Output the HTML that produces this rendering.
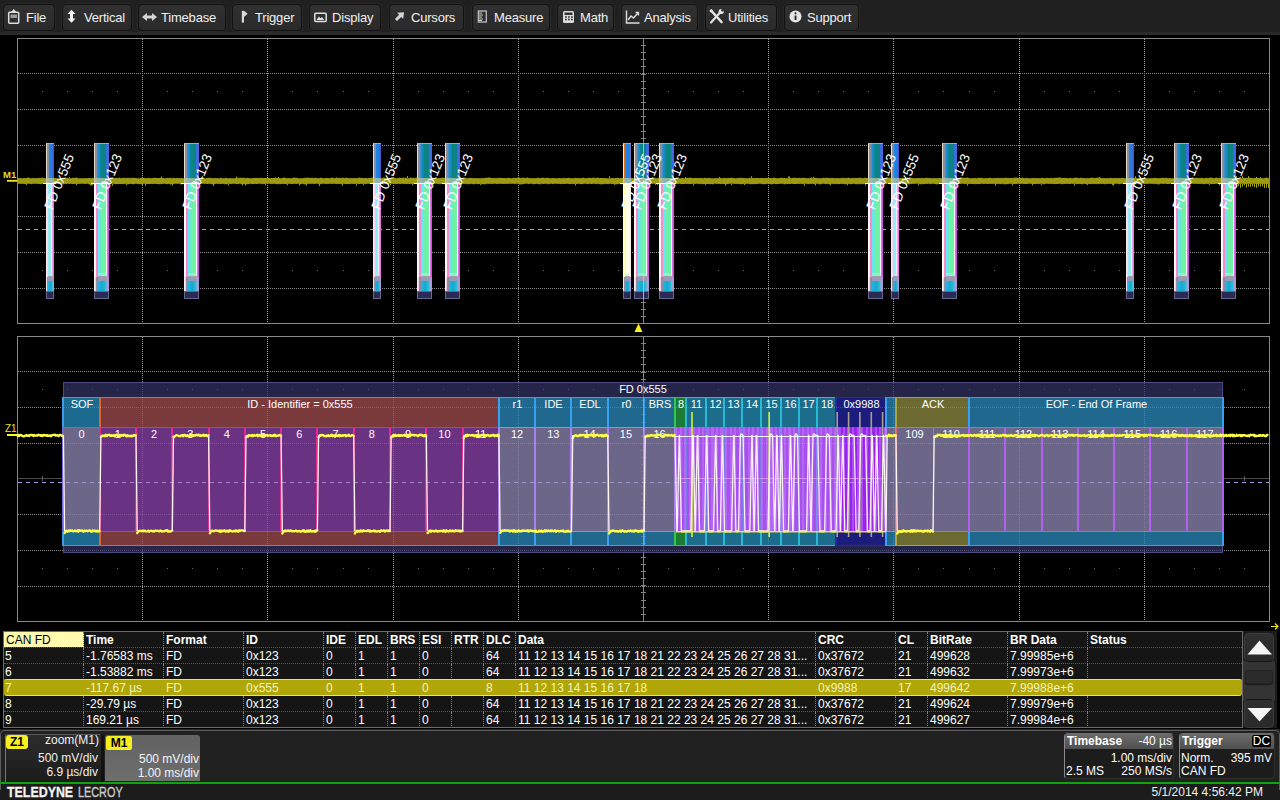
<!DOCTYPE html>
<html><head><meta charset="utf-8"><title>CAN FD decode</title>
<style>
*{box-sizing:border-box;margin:0;padding:0}
html,body{width:1280px;height:800px;overflow:hidden;background:#000;}
body{font-family:"Liberation Sans",sans-serif;color:#fff;position:relative}
#menubar{position:absolute;left:0;top:0;width:1280px;height:35px;background:#202020;border-bottom:3px solid #2a2a2a}
.mb{position:absolute;top:4px;height:27px;background:linear-gradient(#313131,#2a2a2a);border:1px solid #121212;border-radius:4px;box-shadow:0 0 0 1px #282828;color:#f0f0f0;font-size:13px;letter-spacing:-0.2px;line-height:25px;white-space:nowrap}
.mb span{position:absolute;top:0}
.mb svg{position:absolute;left:0;top:0}
#scope{position:absolute;left:0;top:0}
#tbl{position:absolute;left:3px;top:631px;width:1240px;height:97px;background:#151515;border:1px solid #6a6a6a;border-right-color:#6a6a6a;font-size:12px;overflow:hidden}
.row{position:absolute;left:0;width:1238px;height:16px;border-bottom:1px dotted #5a5a5a;line-height:17px;white-space:nowrap}
.row.hd{font-weight:bold}
.row.sel{background:#b0a608;color:#f6f2b8;border-bottom:1px solid #f0ec28;border-top:1px solid #f0ec28;border-radius:3px;line-height:16px;margin-top:-1px;height:17px}
.c{position:absolute;top:0;height:16px;padding-left:2px;border-left:1px dotted #808080;overflow:hidden;margin-left:-1px}
.row.sel .c{border-left-color:transparent;top:0}
.c0{border-left:none}
#footer{position:absolute;left:0;top:729px;width:1280px;height:71px;background:linear-gradient(#212121 0,#212121 53px,#1c1c1c 53px)}
</style></head>
<body>
<svg id="scope" width="1280" height="632" viewBox="0 0 1280 632" font-family='"Liberation Sans", sans-serif'>
<g shape-rendering="crispEdges" fill="none">
<line x1="142.5" y1="39" x2="142.5" y2="323" stroke="#9c9c9c" stroke-dasharray="1 1"/>
<line x1="267.5" y1="39" x2="267.5" y2="323" stroke="#9c9c9c" stroke-dasharray="1 1"/>
<line x1="393.5" y1="39" x2="393.5" y2="323" stroke="#9c9c9c" stroke-dasharray="1 1"/>
<line x1="518.5" y1="39" x2="518.5" y2="323" stroke="#9c9c9c" stroke-dasharray="1 1"/>
<line x1="768.5" y1="39" x2="768.5" y2="323" stroke="#9c9c9c" stroke-dasharray="1 1"/>
<line x1="893.5" y1="39" x2="893.5" y2="323" stroke="#9c9c9c" stroke-dasharray="1 1"/>
<line x1="1019.5" y1="39" x2="1019.5" y2="323" stroke="#9c9c9c" stroke-dasharray="1 1"/>
<line x1="1144.5" y1="39" x2="1144.5" y2="323" stroke="#9c9c9c" stroke-dasharray="1 1"/>
<line x1="18" y1="73.5" x2="1269" y2="73.5" stroke="#8a8a8a" stroke-dasharray="1 1"/>
<line x1="18" y1="109.5" x2="1269" y2="109.5" stroke="#8a8a8a" stroke-dasharray="1 1"/>
<line x1="18" y1="145.5" x2="1269" y2="145.5" stroke="#8a8a8a" stroke-dasharray="1 1"/>
<line x1="18" y1="216.5" x2="1269" y2="216.5" stroke="#8a8a8a" stroke-dasharray="1 1"/>
<line x1="18" y1="252.5" x2="1269" y2="252.5" stroke="#8a8a8a" stroke-dasharray="1 1"/>
<line x1="18" y1="288.5" x2="1269" y2="288.5" stroke="#8a8a8a" stroke-dasharray="1 1"/>
<line x1="643.5" y1="38" x2="643.5" y2="323" stroke="#848484"/>
<line x1="17" y1="180.5" x2="1269" y2="180.5" stroke="#4a4a4a"/>
<path d="M641.0 45.5h5 M641.0 52.5h5 M641.0 59.5h5 M641.0 66.5h5 M641.0 74.5h5 M641.0 81.5h5 M641.0 88.5h5 M641.0 95.5h5 M641.0 102.5h5 M641.0 109.5h5 M641.0 116.5h5 M641.0 124.5h5 M641.0 131.5h5 M641.0 138.5h5 M641.0 145.5h5 M641.0 152.5h5 M641.0 159.5h5 M641.0 166.5h5 M641.0 173.5h5 M641.0 180.5h5 M641.0 188.5h5 M641.0 195.5h5 M641.0 202.5h5 M641.0 209.5h5 M641.0 216.5h5 M641.0 223.5h5 M641.0 230.5h5 M641.0 238.5h5 M641.0 245.5h5 M641.0 252.5h5 M641.0 259.5h5 M641.0 266.5h5 M641.0 273.5h5 M641.0 280.5h5 M641.0 287.5h5 M641.0 294.5h5 M641.0 302.5h5 M641.0 309.5h5 M641.0 316.5h5" stroke="#848484"/>
<path d="M42.5 178.0v5 M67.5 178.0v5 M92.5 178.0v5 M117.5 178.0v5 M142.5 178.0v5 M167.5 178.0v5 M192.5 178.0v5 M217.5 178.0v5 M242.5 178.0v5 M267.5 178.0v5 M292.5 178.0v5 M317.5 178.0v5 M343.5 178.0v5 M368.5 178.0v5 M393.5 178.0v5 M418.5 178.0v5 M443.5 178.0v5 M468.5 178.0v5 M493.5 178.0v5 M518.5 178.0v5 M543.5 178.0v5 M568.5 178.0v5 M593.5 178.0v5 M618.5 178.0v5 M643.5 178.0v5 M668.5 178.0v5 M693.5 178.0v5 M718.5 178.0v5 M743.5 178.0v5 M768.5 178.0v5 M793.5 178.0v5 M818.5 178.0v5 M843.5 178.0v5 M868.5 178.0v5 M893.5 178.0v5 M918.5 178.0v5 M943.5 178.0v5 M969.5 178.0v5 M994.5 178.0v5 M1019.5 178.0v5 M1044.5 178.0v5 M1069.5 178.0v5 M1094.5 178.0v5 M1119.5 178.0v5 M1144.5 178.0v5 M1169.5 178.0v5 M1194.5 178.0v5 M1219.5 178.0v5 M1244.5 178.0v5" stroke="#5e5e5e"/>
<path d="M42 91.5h1 M67 91.5h1 M92 91.5h1 M117 91.5h1 M167 91.5h1 M192 91.5h1 M217 91.5h1 M242 91.5h1 M292 91.5h1 M317 91.5h1 M343 91.5h1 M368 91.5h1 M418 91.5h1 M443 91.5h1 M468 91.5h1 M493 91.5h1 M543 91.5h1 M568 91.5h1 M593 91.5h1 M618 91.5h1 M668 91.5h1 M693 91.5h1 M718 91.5h1 M743 91.5h1 M793 91.5h1 M818 91.5h1 M843 91.5h1 M868 91.5h1 M918 91.5h1 M943 91.5h1 M969 91.5h1 M994 91.5h1 M1044 91.5h1 M1069 91.5h1 M1094 91.5h1 M1119 91.5h1 M1169 91.5h1 M1194 91.5h1 M1219 91.5h1 M1244 91.5h1 M42 270.5h1 M67 270.5h1 M92 270.5h1 M117 270.5h1 M167 270.5h1 M192 270.5h1 M217 270.5h1 M242 270.5h1 M292 270.5h1 M317 270.5h1 M343 270.5h1 M368 270.5h1 M418 270.5h1 M443 270.5h1 M468 270.5h1 M493 270.5h1 M543 270.5h1 M568 270.5h1 M593 270.5h1 M618 270.5h1 M668 270.5h1 M693 270.5h1 M718 270.5h1 M743 270.5h1 M793 270.5h1 M818 270.5h1 M843 270.5h1 M868 270.5h1 M918 270.5h1 M943 270.5h1 M969 270.5h1 M994 270.5h1 M1044 270.5h1 M1069 270.5h1 M1094 270.5h1 M1119 270.5h1 M1169 270.5h1 M1194 270.5h1 M1219 270.5h1 M1244 270.5h1" stroke="#686868"/>
<rect x="17.5" y="38.5" width="1252" height="285" stroke="#888888"/>
</g>
<path d="M18 178.2 L19 177.9 L20 178.0 L21 178.3 L22 178.3 L23 178.3 L24 178.1 L25 178.3 L26 177.9 L27 178.0 L28 177.4 L29 177.6 L30 178.3 L31 178.2 L32 178.3 L33 177.9 L34 178.0 L35 178.3 L36 177.9 L37 178.2 L38 178.1 L39 177.7 L40 178.2 L41 178.1 L42 177.8 L43 177.4 L44 178.1 L45 178.3 L46 178.3 L47 177.8 L48 177.6 L49 177.9 L50 178.0 L51 177.7 L52 178.1 L53 178.3 L54 177.9 L55 177.7 L56 178.2 L57 178.3 L58 178.3 L59 178.3 L60 178.3 L61 178.2 L62 178.3 L63 178.0 L64 177.7 L65 178.2 L66 178.2 L67 177.5 L68 178.3 L69 178.3 L70 178.0 L71 178.3 L72 178.2 L73 177.5 L74 178.1 L75 177.9 L76 177.6 L77 177.6 L78 178.2 L79 178.3 L80 178.3 L81 178.3 L82 178.2 L83 178.3 L84 178.3 L85 178.3 L86 178.0 L87 178.2 L88 178.2 L89 177.7 L90 178.1 L91 178.3 L92 178.2 L93 177.7 L94 178.3 L95 178.0 L96 178.0 L97 178.0 L98 177.6 L99 178.2 L100 178.3 L101 178.0 L102 178.2 L103 177.7 L104 177.6 L105 177.7 L106 178.3 L107 178.2 L108 178.3 L109 178.2 L110 177.5 L111 177.5 L112 177.5 L113 178.3 L114 178.3 L115 177.9 L116 177.7 L117 177.9 L118 178.3 L119 177.6 L120 177.8 L121 178.3 L122 178.2 L123 177.5 L124 178.2 L125 177.8 L126 178.3 L127 177.6 L128 178.3 L129 177.4 L130 178.2 L131 178.3 L132 177.5 L133 178.1 L134 178.1 L135 177.7 L136 178.2 L137 178.2 L138 178.2 L139 178.3 L140 178.2 L141 178.0 L142 178.1 L143 178.1 L144 178.1 L145 178.1 L146 178.3 L147 178.3 L148 177.8 L149 178.2 L150 178.0 L151 178.3 L152 178.2 L153 177.8 L154 178.0 L155 177.6 L156 178.0 L157 178.1 L158 178.1 L159 178.1 L160 177.9 L161 177.5 L162 178.0 L163 177.7 L164 178.3 L165 178.3 L166 178.3 L167 177.7 L168 178.3 L169 177.9 L170 177.6 L171 178.3 L172 178.2 L173 177.4 L174 178.3 L175 178.1 L176 178.3 L177 177.8 L178 178.0 L179 178.3 L180 177.9 L181 178.3 L182 177.7 L183 178.3 L184 178.3 L185 178.2 L186 178.1 L187 177.7 L188 178.3 L189 178.0 L190 178.3 L191 177.9 L192 178.3 L193 177.9 L194 178.3 L195 178.3 L196 178.1 L197 178.0 L198 178.2 L199 178.1 L200 178.3 L201 178.3 L202 178.2 L203 177.8 L204 178.1 L205 178.2 L206 178.2 L207 177.8 L208 178.3 L209 177.5 L210 177.7 L211 178.1 L212 178.2 L213 177.9 L214 178.2 L215 177.9 L216 178.2 L217 178.3 L218 178.3 L219 178.2 L220 178.3 L221 177.6 L222 178.2 L223 178.2 L224 178.3 L225 178.2 L226 177.4 L227 178.2 L228 178.2 L229 178.3 L230 178.1 L231 178.3 L232 178.3 L233 178.3 L234 178.3 L235 178.2 L236 178.0 L237 177.8 L238 177.8 L239 178.2 L240 177.4 L241 177.8 L242 178.3 L243 177.6 L244 177.8 L245 178.3 L246 178.1 L247 177.7 L248 178.0 L249 177.9 L250 178.3 L251 178.3 L252 178.3 L253 178.0 L254 177.9 L255 178.1 L256 177.7 L257 178.1 L258 177.9 L259 177.8 L260 178.3 L261 177.8 L262 177.8 L263 178.1 L264 178.1 L265 177.8 L266 177.9 L267 178.3 L268 177.8 L269 178.0 L270 178.3 L271 177.9 L272 177.9 L273 178.1 L274 178.1 L275 177.6 L276 177.4 L277 178.3 L278 177.7 L279 178.1 L280 178.3 L281 178.3 L282 178.3 L283 177.5 L284 177.7 L285 177.6 L286 178.3 L287 178.1 L288 178.3 L289 178.1 L290 178.3 L291 178.2 L292 178.3 L293 177.7 L294 177.5 L295 177.6 L296 178.2 L297 177.4 L298 178.2 L299 178.2 L300 178.3 L301 178.2 L302 178.2 L303 178.1 L304 178.2 L305 177.6 L306 177.9 L307 177.5 L308 177.8 L309 177.8 L310 177.8 L311 178.2 L312 177.5 L313 178.1 L314 178.2 L315 177.4 L316 177.9 L317 178.0 L318 178.3 L319 178.3 L320 178.1 L321 177.6 L322 178.1 L323 178.3 L324 178.2 L325 178.2 L326 178.0 L327 177.8 L328 178.1 L329 178.2 L330 178.3 L331 177.5 L332 178.1 L333 177.6 L334 178.2 L335 178.2 L336 177.5 L337 177.6 L338 178.3 L339 177.6 L340 178.0 L341 178.2 L342 177.7 L343 177.4 L344 178.3 L345 178.1 L346 177.5 L347 177.9 L348 178.1 L349 178.3 L350 178.3 L351 177.9 L352 178.3 L353 177.9 L354 178.3 L355 178.1 L356 178.2 L357 178.0 L358 178.2 L359 177.5 L360 177.6 L361 178.3 L362 177.5 L363 178.2 L364 178.1 L365 178.1 L366 177.9 L367 178.3 L368 178.2 L369 177.9 L370 177.7 L371 178.1 L372 177.5 L373 177.7 L374 178.3 L375 178.2 L376 178.1 L377 178.3 L378 177.9 L379 178.3 L380 178.3 L381 178.3 L382 178.3 L383 177.6 L384 177.8 L385 177.5 L386 178.3 L387 177.8 L388 177.9 L389 178.2 L390 178.3 L391 178.2 L392 177.5 L393 177.5 L394 178.2 L395 177.7 L396 178.3 L397 178.2 L398 178.3 L399 177.6 L400 178.1 L401 177.8 L402 178.3 L403 177.5 L404 177.8 L405 178.2 L406 177.5 L407 178.2 L408 178.2 L409 178.3 L410 177.5 L411 177.5 L412 178.3 L413 177.5 L414 178.2 L415 178.1 L416 177.5 L417 177.7 L418 177.7 L419 178.0 L420 178.2 L421 177.7 L422 178.3 L423 178.2 L424 178.3 L425 178.2 L426 177.6 L427 178.2 L428 178.3 L429 177.8 L430 178.3 L431 178.0 L432 177.8 L433 177.9 L434 177.7 L435 178.0 L436 177.8 L437 178.2 L438 178.3 L439 178.0 L440 178.2 L441 178.1 L442 177.7 L443 177.4 L444 178.1 L445 177.7 L446 178.3 L447 178.3 L448 177.4 L449 177.5 L450 177.6 L451 178.2 L452 177.5 L453 178.0 L454 178.3 L455 178.3 L456 178.2 L457 177.9 L458 178.3 L459 177.9 L460 178.2 L461 177.7 L462 178.3 L463 178.2 L464 177.9 L465 178.3 L466 178.1 L467 178.2 L468 178.2 L469 178.2 L470 177.6 L471 178.2 L472 177.8 L473 178.3 L474 178.1 L475 178.2 L476 178.1 L477 178.3 L478 177.9 L479 178.3 L480 178.2 L481 178.3 L482 178.1 L483 178.3 L484 177.7 L485 178.3 L486 177.5 L487 178.1 L488 177.5 L489 177.6 L490 177.7 L491 177.7 L492 178.2 L493 177.7 L494 178.3 L495 178.1 L496 178.3 L497 177.8 L498 178.3 L499 177.8 L500 177.7 L501 178.0 L502 177.9 L503 178.1 L504 178.1 L505 178.1 L506 178.3 L507 178.1 L508 177.8 L509 178.1 L510 178.1 L511 178.3 L512 178.3 L513 178.1 L514 177.9 L515 177.8 L516 178.1 L517 178.1 L518 177.5 L519 177.6 L520 177.8 L521 178.3 L522 178.1 L523 177.5 L524 177.7 L525 178.3 L526 177.8 L527 177.6 L528 177.7 L529 178.1 L530 178.3 L531 178.1 L532 178.3 L533 178.3 L534 177.9 L535 178.3 L536 178.3 L537 177.9 L538 177.6 L539 178.0 L540 178.3 L541 177.9 L542 177.7 L543 177.4 L544 178.2 L545 178.1 L546 177.8 L547 177.7 L548 177.9 L549 178.0 L550 178.2 L551 178.3 L552 178.0 L553 178.1 L554 178.3 L555 177.9 L556 178.3 L557 178.3 L558 178.3 L559 178.0 L560 177.9 L561 178.3 L562 178.2 L563 178.3 L564 177.6 L565 178.2 L566 178.3 L567 178.0 L568 177.9 L569 177.5 L570 178.2 L571 178.3 L572 178.2 L573 178.3 L574 178.3 L575 177.5 L576 178.3 L577 178.1 L578 177.7 L579 178.2 L580 178.3 L581 177.7 L582 178.3 L583 177.8 L584 177.8 L585 178.3 L586 178.3 L587 178.2 L588 177.9 L589 177.8 L590 178.0 L591 177.7 L592 178.2 L593 177.5 L594 177.6 L595 178.2 L596 177.8 L597 177.8 L598 177.6 L599 178.2 L600 177.9 L601 177.9 L602 178.1 L603 177.9 L604 178.1 L605 178.0 L606 178.3 L607 178.3 L608 178.3 L609 178.3 L610 178.2 L611 178.3 L612 177.9 L613 177.9 L614 178.3 L615 178.2 L616 177.7 L617 178.3 L618 177.5 L619 178.3 L620 178.3 L621 177.7 L622 177.9 L623 177.9 L624 178.3 L625 177.8 L626 178.2 L627 178.3 L628 178.2 L629 178.2 L630 177.5 L631 177.6 L632 178.3 L633 178.1 L634 178.2 L635 178.0 L636 177.6 L637 177.7 L638 178.3 L639 177.8 L640 178.3 L641 178.1 L642 178.3 L643 178.2 L644 178.2 L645 178.2 L646 177.9 L647 178.3 L648 178.3 L649 177.9 L650 177.9 L651 178.2 L652 177.6 L653 177.6 L654 178.3 L655 177.6 L656 178.2 L657 178.3 L658 178.0 L659 177.8 L660 178.2 L661 178.3 L662 177.9 L663 178.3 L664 177.8 L665 178.3 L666 177.6 L667 178.3 L668 177.9 L669 178.3 L670 178.2 L671 178.1 L672 178.2 L673 177.4 L674 178.3 L675 178.3 L676 177.4 L677 177.8 L678 178.3 L679 178.3 L680 178.2 L681 178.2 L682 177.9 L683 177.9 L684 178.3 L685 178.2 L686 177.6 L687 178.0 L688 178.1 L689 177.8 L690 177.8 L691 177.6 L692 177.9 L693 178.2 L694 178.3 L695 177.7 L696 177.9 L697 178.1 L698 178.0 L699 177.9 L700 178.3 L701 177.8 L702 178.1 L703 178.3 L704 178.3 L705 177.5 L706 178.3 L707 178.0 L708 178.1 L709 177.7 L710 178.1 L711 178.3 L712 178.2 L713 178.3 L714 178.2 L715 178.2 L716 178.3 L717 178.1 L718 178.2 L719 178.3 L720 177.5 L721 178.3 L722 178.2 L723 178.3 L724 177.7 L725 178.1 L726 178.3 L727 178.2 L728 177.7 L729 178.1 L730 178.0 L731 177.7 L732 177.6 L733 178.2 L734 178.1 L735 178.3 L736 178.2 L737 178.2 L738 178.1 L739 177.9 L740 177.5 L741 178.3 L742 177.6 L743 178.3 L744 177.9 L745 178.3 L746 177.9 L747 178.3 L748 178.3 L749 178.2 L750 177.6 L751 178.3 L752 178.0 L753 177.9 L754 177.7 L755 178.3 L756 178.0 L757 178.1 L758 178.0 L759 178.3 L760 178.1 L761 178.1 L762 178.1 L763 178.0 L764 178.3 L765 178.1 L766 177.9 L767 178.2 L768 177.5 L769 177.9 L770 178.3 L771 177.9 L772 178.2 L773 178.1 L774 177.6 L775 177.8 L776 178.2 L777 178.2 L778 178.1 L779 178.3 L780 178.1 L781 177.7 L782 177.7 L783 178.1 L784 178.1 L785 177.9 L786 178.2 L787 178.2 L788 177.9 L789 178.3 L790 177.6 L791 178.3 L792 178.3 L793 177.5 L794 177.9 L795 177.6 L796 178.0 L797 177.9 L798 177.9 L799 177.9 L800 177.8 L801 178.3 L802 177.8 L803 177.9 L804 177.7 L805 178.0 L806 178.2 L807 178.2 L808 177.9 L809 178.3 L810 178.3 L811 177.7 L812 177.5 L813 178.3 L814 178.0 L815 177.4 L816 178.1 L817 177.9 L818 178.3 L819 178.3 L820 178.3 L821 178.3 L822 178.3 L823 177.8 L824 177.8 L825 178.3 L826 177.8 L827 177.8 L828 177.9 L829 178.1 L830 178.2 L831 177.8 L832 178.3 L833 177.7 L834 178.2 L835 178.3 L836 178.1 L837 178.2 L838 178.1 L839 178.3 L840 178.2 L841 177.9 L842 178.2 L843 177.5 L844 178.0 L845 178.3 L846 177.9 L847 178.2 L848 177.4 L849 178.0 L850 178.1 L851 178.2 L852 178.0 L853 177.7 L854 178.3 L855 178.1 L856 177.7 L857 178.3 L858 177.7 L859 178.0 L860 177.6 L861 177.9 L862 178.2 L863 178.0 L864 178.3 L865 177.5 L866 178.0 L867 178.1 L868 178.2 L869 177.7 L870 178.3 L871 177.8 L872 178.0 L873 177.6 L874 178.1 L875 178.3 L876 178.3 L877 178.2 L878 178.2 L879 178.3 L880 177.4 L881 178.3 L882 177.7 L883 178.0 L884 178.1 L885 178.3 L886 177.6 L887 178.0 L888 177.8 L889 177.5 L890 177.7 L891 178.2 L892 178.3 L893 178.3 L894 178.0 L895 178.1 L896 177.6 L897 178.0 L898 178.3 L899 178.2 L900 177.9 L901 177.9 L902 178.1 L903 177.5 L904 178.3 L905 178.2 L906 177.6 L907 177.7 L908 177.7 L909 177.9 L910 178.3 L911 177.8 L912 177.9 L913 178.0 L914 178.3 L915 178.2 L916 178.1 L917 178.2 L918 177.9 L919 177.8 L920 178.3 L921 178.3 L922 177.6 L923 178.3 L924 178.3 L925 177.7 L926 178.1 L927 177.7 L928 177.9 L929 178.3 L930 177.8 L931 178.3 L932 178.2 L933 178.3 L934 177.7 L935 178.3 L936 178.2 L937 178.3 L938 178.3 L939 177.9 L940 178.1 L941 178.2 L942 178.2 L943 177.4 L944 178.3 L945 177.6 L946 177.8 L947 177.4 L948 177.7 L949 178.3 L950 177.7 L951 178.3 L952 177.6 L953 178.0 L954 178.3 L955 177.8 L956 178.3 L957 178.0 L958 178.2 L959 178.0 L960 177.7 L961 178.3 L962 177.8 L963 177.8 L964 177.7 L965 177.7 L966 178.1 L967 177.6 L968 177.6 L969 178.3 L970 178.2 L971 178.2 L972 178.3 L973 178.1 L974 178.3 L975 177.7 L976 178.2 L977 178.2 L978 178.3 L979 177.5 L980 178.1 L981 178.0 L982 177.5 L983 178.3 L984 178.2 L985 178.3 L986 177.9 L987 178.3 L988 178.0 L989 177.9 L990 177.6 L991 178.3 L992 178.1 L993 178.2 L994 178.2 L995 178.0 L996 178.3 L997 177.8 L998 177.7 L999 178.2 L1000 177.7 L1001 178.2 L1002 177.8 L1003 178.2 L1004 178.1 L1005 177.7 L1006 177.7 L1007 178.3 L1008 177.5 L1009 178.2 L1010 177.9 L1011 178.0 L1012 178.1 L1013 178.3 L1014 177.5 L1015 177.5 L1016 177.7 L1017 177.6 L1018 177.9 L1019 177.9 L1020 178.0 L1021 178.0 L1022 178.1 L1023 177.5 L1024 178.2 L1025 178.3 L1026 177.5 L1027 178.2 L1028 178.0 L1029 178.3 L1030 178.2 L1031 178.2 L1032 178.3 L1033 177.7 L1034 178.0 L1035 178.3 L1036 178.1 L1037 178.0 L1038 178.2 L1039 178.3 L1040 178.2 L1041 178.3 L1042 177.6 L1043 178.0 L1044 178.2 L1045 178.2 L1046 178.3 L1047 177.6 L1048 178.3 L1049 178.1 L1050 178.3 L1051 177.5 L1052 178.3 L1053 178.2 L1054 178.0 L1055 177.7 L1056 177.8 L1057 177.8 L1058 177.7 L1059 177.5 L1060 177.6 L1061 177.8 L1062 178.1 L1063 178.0 L1064 177.7 L1065 178.0 L1066 178.1 L1067 177.8 L1068 178.2 L1069 178.2 L1070 177.7 L1071 178.1 L1072 178.3 L1073 178.3 L1074 178.0 L1075 177.5 L1076 177.7 L1077 177.5 L1078 178.1 L1079 178.3 L1080 178.0 L1081 177.5 L1082 178.0 L1083 178.1 L1084 177.9 L1085 178.2 L1086 178.2 L1087 177.9 L1088 178.3 L1089 178.2 L1090 178.0 L1091 177.5 L1092 178.1 L1093 177.4 L1094 178.0 L1095 178.3 L1096 177.4 L1097 178.1 L1098 177.6 L1099 177.7 L1100 177.6 L1101 178.3 L1102 178.1 L1103 178.3 L1104 177.9 L1105 178.2 L1106 177.9 L1107 178.1 L1108 178.2 L1109 178.3 L1110 177.7 L1111 177.9 L1112 178.1 L1113 178.2 L1114 178.0 L1115 178.0 L1116 178.3 L1117 177.8 L1118 178.3 L1119 178.1 L1120 178.0 L1121 178.3 L1122 177.8 L1123 177.8 L1124 178.3 L1125 178.3 L1126 178.0 L1127 178.1 L1128 178.3 L1129 178.0 L1130 178.1 L1131 178.2 L1132 177.5 L1133 178.2 L1134 177.7 L1135 178.0 L1136 178.1 L1137 178.2 L1138 177.8 L1139 178.2 L1140 178.1 L1141 178.2 L1142 178.2 L1143 177.5 L1144 178.0 L1145 178.0 L1146 178.2 L1147 178.3 L1148 178.2 L1149 178.3 L1150 178.2 L1151 177.9 L1152 178.3 L1153 178.3 L1154 177.7 L1155 178.1 L1156 177.7 L1157 178.2 L1158 178.2 L1159 178.3 L1160 178.1 L1161 178.1 L1162 177.9 L1163 177.6 L1164 178.2 L1165 178.0 L1166 177.6 L1167 178.1 L1168 178.2 L1169 178.2 L1170 178.0 L1171 178.2 L1172 178.3 L1173 178.2 L1174 178.3 L1175 178.2 L1176 178.2 L1177 178.2 L1178 178.3 L1179 178.2 L1180 177.6 L1181 177.6 L1182 178.3 L1183 178.3 L1184 177.9 L1185 178.1 L1186 177.9 L1187 177.7 L1188 177.9 L1189 178.3 L1190 177.8 L1191 178.3 L1192 178.3 L1193 178.2 L1194 178.3 L1195 177.9 L1196 177.7 L1197 177.8 L1198 178.1 L1199 178.2 L1200 177.7 L1201 178.2 L1202 177.6 L1203 178.3 L1204 178.3 L1205 178.3 L1206 177.8 L1207 177.9 L1208 177.8 L1209 178.2 L1210 177.5 L1211 177.5 L1212 177.8 L1213 177.9 L1214 178.3 L1215 178.1 L1216 177.5 L1217 177.8 L1218 177.9 L1219 178.2 L1220 177.5 L1221 178.0 L1222 178.3 L1223 178.1 L1224 178.2 L1225 177.9 L1226 178.2 L1227 178.1 L1228 177.5 L1229 178.2 L1230 178.3 L1231 178.2 L1232 178.0 L1233 178.3 L1234 178.0 L1235 177.8 L1236 178.3 L1237 178.2 L1238 178.3 L1239 178.3 L1240 178.1 L1241 178.2 L1242 178.2 L1243 178.3 L1244 177.4 L1245 178.3 L1246 177.4 L1247 178.3 L1248 178.1 L1249 178.0 L1250 177.5 L1251 177.9 L1252 177.9 L1253 178.2 L1254 178.3 L1255 177.7 L1256 178.3 L1257 177.7 L1258 178.3 L1259 177.7 L1260 178.2 L1261 177.7 L1262 178.2 L1263 178.2 L1264 178.2 L1265 178.0 L1266 177.7 L1267 177.6 L1268 178.1 L1269 178.3 L1269 183.8 L1268 183.9 L1267 184.3 L1266 184.1 L1265 184.0 L1264 183.7 L1263 184.2 L1262 183.9 L1261 183.8 L1260 183.7 L1259 184.1 L1258 184.1 L1257 184.3 L1256 184.0 L1255 183.8 L1254 184.1 L1253 183.7 L1252 183.7 L1251 184.3 L1250 184.0 L1249 183.7 L1248 183.7 L1247 183.9 L1246 183.9 L1245 184.1 L1244 184.1 L1243 183.7 L1242 183.7 L1241 183.9 L1240 183.7 L1239 184.1 L1238 183.8 L1237 183.7 L1236 183.8 L1235 184.2 L1234 183.9 L1233 184.0 L1232 184.1 L1231 184.2 L1230 183.9 L1229 184.3 L1228 183.8 L1227 183.8 L1226 183.7 L1225 184.0 L1224 183.7 L1223 183.7 L1222 183.8 L1221 183.7 L1220 184.0 L1219 183.9 L1218 184.2 L1217 183.7 L1216 183.7 L1215 183.9 L1214 184.1 L1213 183.8 L1212 184.2 L1211 184.0 L1210 183.8 L1209 183.7 L1208 184.2 L1207 183.8 L1206 183.7 L1205 184.3 L1204 184.2 L1203 183.7 L1202 184.0 L1201 183.7 L1200 184.1 L1199 183.7 L1198 184.0 L1197 183.7 L1196 183.9 L1195 183.7 L1194 183.8 L1193 183.8 L1192 183.7 L1191 183.7 L1190 184.1 L1189 184.3 L1188 183.7 L1187 183.8 L1186 183.7 L1185 184.0 L1184 183.8 L1183 184.0 L1182 183.8 L1181 184.2 L1180 184.1 L1179 183.8 L1178 184.1 L1177 183.7 L1176 183.7 L1175 183.9 L1174 183.9 L1173 184.0 L1172 184.2 L1171 183.7 L1170 183.8 L1169 184.0 L1168 184.1 L1167 183.9 L1166 183.7 L1165 183.7 L1164 183.7 L1163 183.9 L1162 183.7 L1161 183.7 L1160 183.7 L1159 184.4 L1158 184.4 L1157 184.1 L1156 183.7 L1155 184.2 L1154 183.7 L1153 183.8 L1152 184.1 L1151 183.8 L1150 183.7 L1149 183.8 L1148 183.7 L1147 184.2 L1146 183.7 L1145 183.8 L1144 183.7 L1143 183.8 L1142 183.7 L1141 183.7 L1140 184.2 L1139 184.3 L1138 183.7 L1137 183.8 L1136 184.3 L1135 184.4 L1134 183.8 L1133 184.3 L1132 184.2 L1131 183.7 L1130 184.0 L1129 184.4 L1128 184.3 L1127 183.8 L1126 183.8 L1125 184.3 L1124 183.8 L1123 183.8 L1122 183.8 L1121 183.7 L1120 184.2 L1119 184.2 L1118 183.7 L1117 183.7 L1116 183.7 L1115 183.8 L1114 184.4 L1113 184.0 L1112 183.9 L1111 183.7 L1110 183.9 L1109 183.8 L1108 184.0 L1107 184.1 L1106 183.7 L1105 184.4 L1104 184.0 L1103 183.7 L1102 183.9 L1101 183.8 L1100 183.8 L1099 184.4 L1098 184.0 L1097 183.7 L1096 184.2 L1095 183.8 L1094 184.2 L1093 183.8 L1092 184.0 L1091 183.9 L1090 184.3 L1089 183.9 L1088 183.8 L1087 183.9 L1086 184.3 L1085 184.0 L1084 183.8 L1083 183.9 L1082 184.4 L1081 184.1 L1080 183.9 L1079 183.7 L1078 184.3 L1077 183.7 L1076 184.2 L1075 183.8 L1074 183.7 L1073 183.9 L1072 183.8 L1071 183.8 L1070 184.2 L1069 183.8 L1068 183.9 L1067 183.8 L1066 183.9 L1065 183.8 L1064 184.2 L1063 183.8 L1062 184.4 L1061 183.9 L1060 183.7 L1059 183.7 L1058 184.1 L1057 183.9 L1056 184.1 L1055 183.9 L1054 184.2 L1053 184.0 L1052 183.8 L1051 184.1 L1050 183.7 L1049 184.1 L1048 183.8 L1047 183.8 L1046 183.7 L1045 184.1 L1044 184.4 L1043 183.9 L1042 183.7 L1041 183.8 L1040 183.9 L1039 183.9 L1038 183.7 L1037 183.9 L1036 183.9 L1035 184.1 L1034 184.0 L1033 184.0 L1032 183.9 L1031 183.7 L1030 183.8 L1029 183.7 L1028 183.7 L1027 183.9 L1026 183.9 L1025 184.0 L1024 184.0 L1023 183.8 L1022 183.8 L1021 183.7 L1020 184.3 L1019 183.8 L1018 183.8 L1017 183.7 L1016 184.3 L1015 184.0 L1014 184.1 L1013 183.7 L1012 183.9 L1011 183.7 L1010 183.8 L1009 183.8 L1008 184.3 L1007 183.9 L1006 184.2 L1005 184.3 L1004 184.4 L1003 183.8 L1002 183.8 L1001 184.3 L1000 183.9 L999 183.8 L998 184.3 L997 183.7 L996 183.9 L995 184.2 L994 183.7 L993 183.7 L992 183.9 L991 183.7 L990 184.1 L989 183.7 L988 183.9 L987 184.0 L986 183.7 L985 183.7 L984 184.2 L983 183.7 L982 183.7 L981 183.7 L980 183.9 L979 183.9 L978 184.2 L977 184.1 L976 184.1 L975 184.2 L974 184.1 L973 183.9 L972 183.9 L971 184.0 L970 183.7 L969 184.2 L968 183.8 L967 183.9 L966 183.7 L965 184.2 L964 183.8 L963 183.7 L962 183.8 L961 183.7 L960 183.9 L959 184.1 L958 183.7 L957 183.9 L956 183.7 L955 183.7 L954 184.1 L953 183.7 L952 183.7 L951 183.8 L950 183.9 L949 183.7 L948 183.8 L947 183.7 L946 183.8 L945 183.7 L944 183.8 L943 184.3 L942 184.4 L941 183.7 L940 183.8 L939 183.7 L938 184.3 L937 184.4 L936 184.3 L935 183.9 L934 183.8 L933 183.8 L932 183.8 L931 184.2 L930 183.9 L929 183.7 L928 183.7 L927 183.9 L926 183.8 L925 184.0 L924 184.3 L923 183.8 L922 184.3 L921 184.3 L920 184.3 L919 183.7 L918 183.7 L917 183.7 L916 183.7 L915 183.7 L914 183.8 L913 184.1 L912 183.8 L911 184.3 L910 183.7 L909 184.4 L908 184.1 L907 183.7 L906 184.3 L905 183.8 L904 183.7 L903 184.4 L902 183.7 L901 183.8 L900 184.4 L899 183.9 L898 184.4 L897 183.8 L896 183.7 L895 184.3 L894 184.2 L893 183.7 L892 183.7 L891 183.7 L890 184.4 L889 184.1 L888 183.8 L887 183.7 L886 183.9 L885 184.4 L884 183.7 L883 183.8 L882 183.7 L881 184.0 L880 183.8 L879 183.7 L878 183.9 L877 183.9 L876 184.1 L875 183.7 L874 184.0 L873 183.9 L872 184.3 L871 183.7 L870 184.2 L869 183.9 L868 184.1 L867 183.7 L866 184.0 L865 183.7 L864 184.1 L863 184.2 L862 183.7 L861 184.3 L860 184.2 L859 183.8 L858 184.2 L857 184.2 L856 184.3 L855 183.9 L854 183.7 L853 183.8 L852 184.3 L851 184.0 L850 184.3 L849 183.8 L848 184.2 L847 184.0 L846 184.2 L845 184.4 L844 183.8 L843 184.1 L842 184.1 L841 183.8 L840 184.0 L839 184.2 L838 184.0 L837 183.9 L836 183.7 L835 184.2 L834 184.1 L833 183.7 L832 184.0 L831 183.7 L830 184.4 L829 184.3 L828 184.1 L827 183.7 L826 184.2 L825 184.1 L824 183.7 L823 183.7 L822 183.7 L821 184.2 L820 184.4 L819 184.0 L818 183.7 L817 183.7 L816 183.7 L815 183.9 L814 184.3 L813 183.8 L812 183.8 L811 183.9 L810 183.7 L809 183.9 L808 184.3 L807 183.8 L806 183.8 L805 183.7 L804 184.1 L803 183.8 L802 184.3 L801 183.7 L800 183.7 L799 183.9 L798 183.7 L797 184.0 L796 184.0 L795 184.0 L794 184.1 L793 184.0 L792 183.7 L791 183.8 L790 183.9 L789 184.1 L788 184.1 L787 183.9 L786 183.8 L785 184.2 L784 184.4 L783 183.8 L782 183.8 L781 183.8 L780 183.9 L779 183.8 L778 184.1 L777 183.9 L776 184.2 L775 184.0 L774 183.7 L773 183.9 L772 184.4 L771 184.3 L770 184.0 L769 184.0 L768 183.7 L767 183.8 L766 184.2 L765 183.9 L764 184.2 L763 184.2 L762 183.9 L761 183.7 L760 183.7 L759 183.7 L758 183.8 L757 184.3 L756 184.1 L755 184.0 L754 184.2 L753 184.3 L752 184.1 L751 184.3 L750 184.2 L749 183.7 L748 184.1 L747 183.7 L746 183.7 L745 184.4 L744 183.7 L743 184.2 L742 184.1 L741 184.2 L740 184.2 L739 183.8 L738 184.0 L737 183.9 L736 183.7 L735 184.1 L734 183.7 L733 183.7 L732 183.8 L731 183.8 L730 183.7 L729 183.8 L728 184.2 L727 184.0 L726 184.4 L725 183.9 L724 184.0 L723 184.1 L722 183.7 L721 184.2 L720 183.9 L719 184.1 L718 183.8 L717 184.1 L716 183.8 L715 183.8 L714 183.7 L713 184.4 L712 184.1 L711 184.0 L710 184.3 L709 183.9 L708 184.0 L707 184.1 L706 183.9 L705 183.9 L704 184.1 L703 183.9 L702 184.4 L701 183.8 L700 184.0 L699 184.3 L698 183.8 L697 183.8 L696 183.7 L695 184.1 L694 183.8 L693 184.0 L692 183.8 L691 184.0 L690 184.1 L689 184.3 L688 183.7 L687 184.1 L686 183.8 L685 184.1 L684 184.0 L683 183.9 L682 183.9 L681 184.2 L680 183.7 L679 183.7 L678 184.0 L677 183.8 L676 184.2 L675 183.8 L674 184.4 L673 184.1 L672 183.7 L671 183.7 L670 183.8 L669 183.7 L668 184.2 L667 183.8 L666 183.7 L665 183.9 L664 183.9 L663 183.8 L662 184.1 L661 184.2 L660 183.8 L659 184.0 L658 184.1 L657 183.9 L656 184.3 L655 183.9 L654 183.7 L653 183.7 L652 183.7 L651 183.8 L650 183.8 L649 184.1 L648 184.1 L647 184.0 L646 183.9 L645 183.7 L644 184.3 L643 184.2 L642 183.9 L641 184.2 L640 183.9 L639 184.4 L638 183.7 L637 183.7 L636 183.7 L635 183.7 L634 184.1 L633 184.1 L632 183.8 L631 184.0 L630 183.9 L629 183.8 L628 184.1 L627 183.7 L626 183.8 L625 183.7 L624 183.7 L623 183.8 L622 184.2 L621 184.2 L620 183.7 L619 183.7 L618 184.3 L617 184.2 L616 184.3 L615 184.2 L614 184.0 L613 184.1 L612 184.0 L611 183.7 L610 183.7 L609 184.3 L608 183.7 L607 184.3 L606 184.0 L605 183.8 L604 184.1 L603 184.2 L602 184.2 L601 184.4 L600 184.0 L599 184.3 L598 183.8 L597 183.8 L596 184.3 L595 183.7 L594 183.7 L593 183.7 L592 184.0 L591 183.9 L590 183.8 L589 183.8 L588 184.2 L587 184.1 L586 183.7 L585 183.7 L584 183.8 L583 183.9 L582 184.2 L581 184.1 L580 184.3 L579 183.8 L578 183.7 L577 184.0 L576 184.0 L575 183.7 L574 183.9 L573 184.1 L572 183.7 L571 183.9 L570 184.3 L569 184.1 L568 183.8 L567 183.8 L566 184.0 L565 183.8 L564 184.1 L563 184.0 L562 183.7 L561 184.3 L560 183.9 L559 183.7 L558 183.9 L557 183.8 L556 183.8 L555 183.7 L554 183.7 L553 184.3 L552 183.8 L551 183.7 L550 183.7 L549 184.0 L548 184.4 L547 183.7 L546 183.7 L545 183.7 L544 184.1 L543 183.9 L542 183.8 L541 183.8 L540 184.4 L539 184.3 L538 183.9 L537 183.8 L536 183.9 L535 184.1 L534 184.3 L533 184.3 L532 183.7 L531 183.8 L530 183.7 L529 184.3 L528 183.7 L527 183.8 L526 183.7 L525 183.8 L524 184.3 L523 183.7 L522 184.4 L521 184.4 L520 184.2 L519 184.4 L518 183.7 L517 183.8 L516 183.7 L515 184.1 L514 183.7 L513 183.7 L512 183.8 L511 183.8 L510 183.7 L509 183.7 L508 184.1 L507 183.7 L506 184.0 L505 183.8 L504 184.0 L503 183.9 L502 183.8 L501 183.9 L500 183.7 L499 183.7 L498 183.9 L497 184.3 L496 183.7 L495 183.8 L494 183.8 L493 183.7 L492 184.2 L491 183.7 L490 183.7 L489 184.0 L488 183.8 L487 183.7 L486 184.4 L485 183.7 L484 184.4 L483 183.9 L482 184.3 L481 183.8 L480 183.9 L479 184.0 L478 184.3 L477 183.9 L476 183.7 L475 184.3 L474 184.2 L473 184.3 L472 183.7 L471 183.7 L470 184.4 L469 183.8 L468 183.9 L467 184.4 L466 183.8 L465 184.0 L464 183.7 L463 183.9 L462 183.7 L461 183.9 L460 183.7 L459 183.7 L458 183.8 L457 183.7 L456 184.0 L455 183.7 L454 183.8 L453 184.0 L452 183.7 L451 184.1 L450 183.8 L449 183.8 L448 183.9 L447 183.7 L446 183.8 L445 184.3 L444 184.2 L443 183.7 L442 184.0 L441 183.7 L440 184.4 L439 183.8 L438 184.3 L437 183.7 L436 183.7 L435 183.8 L434 183.8 L433 183.7 L432 184.2 L431 184.0 L430 183.8 L429 183.8 L428 183.9 L427 183.7 L426 184.4 L425 184.4 L424 183.9 L423 183.7 L422 184.1 L421 183.7 L420 183.8 L419 183.8 L418 184.1 L417 184.1 L416 183.7 L415 183.9 L414 183.7 L413 184.4 L412 183.9 L411 183.7 L410 184.0 L409 184.1 L408 183.8 L407 184.1 L406 184.0 L405 183.8 L404 184.3 L403 183.7 L402 183.7 L401 183.7 L400 184.2 L399 183.7 L398 183.8 L397 184.3 L396 183.9 L395 183.8 L394 184.2 L393 183.7 L392 183.7 L391 183.8 L390 183.7 L389 183.8 L388 183.8 L387 183.7 L386 184.3 L385 183.8 L384 184.4 L383 184.3 L382 183.8 L381 183.7 L380 184.4 L379 183.8 L378 184.3 L377 183.8 L376 183.7 L375 184.4 L374 184.1 L373 183.7 L372 183.8 L371 183.7 L370 184.1 L369 183.7 L368 183.8 L367 183.7 L366 184.3 L365 183.7 L364 184.0 L363 183.7 L362 184.1 L361 183.7 L360 183.9 L359 184.0 L358 183.9 L357 183.7 L356 183.7 L355 183.9 L354 183.7 L353 184.1 L352 183.7 L351 183.8 L350 184.3 L349 184.1 L348 183.9 L347 184.1 L346 184.1 L345 184.0 L344 183.7 L343 183.7 L342 184.2 L341 184.3 L340 183.7 L339 183.9 L338 184.1 L337 183.7 L336 184.2 L335 183.8 L334 183.7 L333 183.7 L332 184.0 L331 183.7 L330 183.8 L329 183.8 L328 183.9 L327 183.8 L326 184.3 L325 183.7 L324 183.7 L323 183.7 L322 183.7 L321 184.4 L320 183.7 L319 184.3 L318 183.7 L317 183.8 L316 183.8 L315 183.7 L314 184.1 L313 183.8 L312 183.7 L311 183.7 L310 184.0 L309 183.8 L308 183.7 L307 183.9 L306 184.3 L305 184.2 L304 184.4 L303 183.7 L302 183.8 L301 184.3 L300 184.2 L299 183.7 L298 183.8 L297 183.9 L296 183.8 L295 183.8 L294 184.1 L293 183.7 L292 184.1 L291 184.2 L290 183.8 L289 183.8 L288 183.9 L287 183.7 L286 184.3 L285 184.1 L284 183.9 L283 183.7 L282 183.9 L281 183.9 L280 184.3 L279 183.8 L278 184.4 L277 183.9 L276 184.3 L275 183.7 L274 183.7 L273 183.9 L272 183.8 L271 184.0 L270 183.8 L269 183.7 L268 183.8 L267 183.7 L266 183.7 L265 184.0 L264 184.0 L263 183.8 L262 184.4 L261 183.7 L260 183.8 L259 183.7 L258 183.7 L257 183.9 L256 184.1 L255 183.7 L254 184.0 L253 184.0 L252 184.2 L251 183.8 L250 183.7 L249 184.0 L248 184.3 L247 184.2 L246 184.2 L245 183.9 L244 184.2 L243 184.0 L242 184.2 L241 184.0 L240 183.7 L239 183.8 L238 184.3 L237 184.0 L236 183.9 L235 183.7 L234 183.7 L233 183.8 L232 183.8 L231 183.9 L230 183.9 L229 183.8 L228 183.8 L227 184.4 L226 183.9 L225 184.4 L224 183.8 L223 183.9 L222 183.7 L221 184.0 L220 184.2 L219 183.7 L218 184.1 L217 183.7 L216 183.8 L215 184.0 L214 184.2 L213 184.4 L212 183.9 L211 184.2 L210 183.8 L209 183.7 L208 183.9 L207 183.9 L206 183.7 L205 183.7 L204 183.7 L203 183.8 L202 183.8 L201 183.7 L200 183.7 L199 183.7 L198 183.7 L197 184.3 L196 183.8 L195 184.2 L194 184.2 L193 184.2 L192 184.3 L191 183.8 L190 183.7 L189 184.1 L188 184.3 L187 183.7 L186 184.3 L185 183.7 L184 184.1 L183 183.8 L182 184.4 L181 184.4 L180 183.9 L179 183.8 L178 183.8 L177 183.7 L176 183.8 L175 183.8 L174 183.8 L173 184.2 L172 183.9 L171 184.4 L170 184.4 L169 183.7 L168 184.1 L167 184.3 L166 184.0 L165 183.7 L164 183.8 L163 183.7 L162 184.3 L161 183.7 L160 184.3 L159 184.3 L158 183.9 L157 184.0 L156 183.9 L155 183.8 L154 184.1 L153 183.9 L152 183.8 L151 183.9 L150 184.1 L149 183.9 L148 183.9 L147 183.9 L146 184.2 L145 183.7 L144 183.7 L143 183.9 L142 184.3 L141 184.3 L140 183.9 L139 184.3 L138 183.8 L137 183.9 L136 183.8 L135 183.7 L134 184.2 L133 184.3 L132 184.0 L131 183.7 L130 183.9 L129 184.0 L128 184.2 L127 184.2 L126 183.7 L125 183.7 L124 184.3 L123 183.8 L122 184.2 L121 184.1 L120 183.9 L119 184.1 L118 184.0 L117 184.2 L116 183.9 L115 184.3 L114 183.7 L113 183.7 L112 183.8 L111 184.4 L110 183.8 L109 184.0 L108 183.8 L107 183.7 L106 183.9 L105 184.1 L104 184.2 L103 184.4 L102 183.7 L101 184.1 L100 184.1 L99 183.8 L98 184.0 L97 184.4 L96 183.7 L95 183.7 L94 184.4 L93 183.7 L92 183.8 L91 183.7 L90 183.9 L89 184.4 L88 183.7 L87 183.8 L86 183.7 L85 184.3 L84 183.8 L83 183.7 L82 183.7 L81 183.7 L80 183.7 L79 184.0 L78 183.8 L77 184.2 L76 184.1 L75 183.7 L74 184.0 L73 184.0 L72 183.9 L71 183.8 L70 183.7 L69 183.9 L68 183.7 L67 183.7 L66 184.3 L65 183.8 L64 184.2 L63 184.3 L62 183.8 L61 184.2 L60 183.7 L59 184.1 L58 183.7 L57 183.9 L56 184.0 L55 183.8 L54 184.4 L53 184.1 L52 184.0 L51 184.3 L50 183.8 L49 184.0 L48 183.8 L47 183.9 L46 184.0 L45 183.9 L44 184.1 L43 183.7 L42 183.8 L41 184.3 L40 183.9 L39 184.1 L38 183.8 L37 183.9 L36 183.8 L35 183.7 L34 183.7 L33 183.8 L32 183.9 L31 184.2 L30 183.7 L29 183.8 L28 183.7 L27 183.8 L26 184.3 L25 183.7 L24 184.2 L23 183.7 L22 183.8 L21 183.9 L20 183.8 L19 183.7 L18 183.7Z" fill="#9b9a12"/>
<path d="M1236.5 184v3.0 M1236.5 178v-1.9 M1238.5 184v1.9 M1240.5 184v3.9 M1240.5 178v-0.6 M1242.5 184v2.6 M1242.5 178v-1.9 M1244.5 184v1.5 M1246.5 184v3.6 M1248.5 184v2.6 M1248.5 178v-1.8 M1250.5 184v2.8 M1252.5 184v2.3 M1254.5 184v3.2 M1256.5 184v3.8 M1256.5 178v-1.1 M1258.5 184v2.6 M1260.5 184v2.4 M1260.5 178v-0.7 M1262.5 184v2.3 M1264.5 184v3.9 M1266.5 184v3.7 M1268.5 184v3.9" stroke="#a8a616" stroke-width="1" fill="none"/>
<path d="M26.5 184v1.0 M51.5 178v-1.5 M69.5 178v-0.9 M76.5 184v1.2 M90.5 184v1.5 M91.5 184v1.4 M92.5 184v1.0 M97.5 184v1.5 M112.5 184v1.8 M126.5 184v1.0 M142.5 184v1.6 M145.5 184v1.9 M161.5 178v-1.4 M172.5 184v1.7 M201.5 178v-0.9 M202.5 178v-1.9 M213.5 184v2.0 M228.5 184v1.6 M236.5 178v-1.5 M242.5 184v1.6 M245.5 184v1.7 M265.5 184v1.3 M278.5 178v-1.0 M287.5 184v1.3 M299.5 184v1.5 M306.5 184v1.6 M319.5 184v2.0 M342.5 184v1.8 M356.5 184v1.8 M363.5 184v1.3 M390.5 184v1.4 M407.5 178v-1.9 M412.5 184v1.3 M419.5 184v1.5 M422.5 178v-1.9 M460.5 178v-1.4 M461.5 184v0.9 M480.5 184v1.0 M575.5 184v1.6 M609.5 178v-1.8 M614.5 184v1.0 M624.5 178v-1.9 M629.5 178v-1.1 M631.5 184v1.8 M655.5 184v0.9 M657.5 184v1.1 M661.5 178v-1.7 M667.5 178v-1.8 M673.5 178v-1.7 M674.5 184v1.8 M685.5 178v-0.9 M693.5 184v1.6 M705.5 184v1.1 M719.5 178v-1.1 M725.5 184v1.6 M731.5 184v1.2 M744.5 184v1.0 M751.5 178v-1.8 M788.5 178v-1.6 M789.5 178v-1.4 M804.5 184v1.9 M813.5 178v-1.2 M815.5 184v1.5 M830.5 184v1.1 M847.5 184v1.4 M865.5 184v1.6 M875.5 184v1.4 M877.5 184v1.0 M878.5 184v1.1 M880.5 184v0.9 M906.5 184v1.7 M918.5 184v1.4 M967.5 184v1.7 M995.5 184v1.8 M1012.5 184v1.5 M1032.5 184v1.4 M1041.5 184v1.2 M1074.5 184v1.8 M1087.5 184v1.2 M1099.5 178v-1.0 M1112.5 184v0.9 M1113.5 184v1.6 M1134.5 184v1.8 M1135.5 178v-1.8 M1176.5 184v1.4 M1178.5 184v1.4 M1209.5 184v1.0 M1219.5 184v1.5 M1224.5 178v-0.9 M1227.5 184v1.3 M1229.5 184v1.0" stroke="#9b9a12" stroke-width="1" fill="none"/>
<line x1="18" y1="229.5" x2="1269" y2="229.500" stroke="#a49ce0" stroke-dasharray="4 4" shape-rendering="crispEdges"/>

<defs>
<linearGradient id="wTop" x1="0" x2="1" y1="0" y2="0">
 <stop offset="0" stop-color="#e8dccc"/><stop offset=".08" stop-color="#e8dccc"/>
 <stop offset=".08" stop-color="#8a8c9c"/><stop offset=".22" stop-color="#8a8c9c"/>
 <stop offset=".24" stop-color="#1c92dc"/><stop offset=".40" stop-color="#1488c0"/>
 <stop offset=".46" stop-color="#0c8484"/><stop offset=".80" stop-color="#0c8282"/>
 <stop offset=".84" stop-color="#3c6ce8"/><stop offset="1" stop-color="#5060e0"/>
</linearGradient>
<linearGradient id="wMid" x1="0" x2="1" y1="0" y2="0">
 <stop offset="0" stop-color="#ffffff"/><stop offset=".12" stop-color="#fff0f8"/>
 <stop offset=".15" stop-color="#f68cc4"/><stop offset=".25" stop-color="#f090c8"/>
 <stop offset=".29" stop-color="#68e4f6"/><stop offset=".40" stop-color="#68e8f0"/>
 <stop offset=".47" stop-color="#6ef0a8"/><stop offset=".80" stop-color="#72f2a2"/>
 <stop offset=".82" stop-color="#f4fff8"/><stop offset=".87" stop-color="#fff0ff"/>
 <stop offset=".89" stop-color="#ec6cec"/><stop offset="1" stop-color="#c040d8"/>
</linearGradient>
<linearGradient id="wLow" x1="0" x2="1" y1="0" y2="0">
 <stop offset="0" stop-color="#fff"/><stop offset=".10" stop-color="#f0d0e8"/>
 <stop offset=".14" stop-color="#9890a8"/><stop offset=".26" stop-color="#8c88a0"/>
 <stop offset=".30" stop-color="#20b4e8"/><stop offset=".55" stop-color="#18a8c8"/>
 <stop offset=".80" stop-color="#28c0e0"/><stop offset=".86" stop-color="#a8a0d0"/>
 <stop offset="1" stop-color="#b090d8"/>
</linearGradient>
<linearGradient id="nTop" x1="0" x2="1" y1="0" y2="0">
 <stop offset="0" stop-color="#e8dccc"/><stop offset=".14" stop-color="#e8dccc"/>
 <stop offset=".14" stop-color="#8a8c9c"/><stop offset=".36" stop-color="#8a8c9c"/>
 <stop offset=".40" stop-color="#1c86e4"/><stop offset=".78" stop-color="#1c80e0"/>
 <stop offset=".84" stop-color="#6050d8"/><stop offset="1" stop-color="#5848c8"/>
</linearGradient>
<linearGradient id="nMid" x1="0" x2="1" y1="0" y2="0">
 <stop offset="0" stop-color="#fff4f4"/><stop offset=".20" stop-color="#ffd0f0"/>
 <stop offset=".30" stop-color="#a0e8f8"/><stop offset=".55" stop-color="#80f0f0"/>
 <stop offset=".66" stop-color="#f0fff8"/><stop offset=".76" stop-color="#ffb0f0"/>
 <stop offset="1" stop-color="#e060e0"/>
</linearGradient>
<linearGradient id="hTop" x1="0" x2="1" y1="0" y2="0">
 <stop offset="0" stop-color="#f0e8d0"/><stop offset=".14" stop-color="#f0e8d0"/>
 <stop offset=".16" stop-color="#e07020"/><stop offset=".34" stop-color="#c86020"/>
 <stop offset=".40" stop-color="#1c86e4"/><stop offset=".78" stop-color="#1c80e0"/>
 <stop offset=".84" stop-color="#7070c0"/><stop offset="1" stop-color="#7070b0"/>
</linearGradient>
<linearGradient id="hMid" x1="0" x2="1" y1="0" y2="0">
 <stop offset="0" stop-color="#ffffe0"/><stop offset=".25" stop-color="#ffffa8"/>
 <stop offset=".45" stop-color="#fffff0"/><stop offset=".80" stop-color="#ffffe8"/>
 <stop offset="1" stop-color="#f0e0d0"/>
</linearGradient>
</defs>
<g shape-rendering="crispEdges">
<rect x="46" y="143" width="8" height="40" fill="url(#nTop)"/>
<rect x="46" y="143" width="8" height="1" fill="#b8b8c8" opacity=".8"/>
<rect x="46" y="178" width="8" height="6" fill="#b8c8a0" opacity=".75"/>
<rect x="46" y="184" width="8" height="93" fill="url(#nMid)"/>
<rect x="46" y="277" width="8" height="14" fill="url(#wLow)"/>
<rect x="48" y="276" width="5" height="5" fill="#a29ab2" opacity=".92"/>
<rect x="48" y="273" width="4" height="3" fill="#b0f0e0" opacity=".55"/>
<rect x="46.5" y="291.500" width="7" height="7" fill="#2a2a54" stroke="#68688e"/>
<rect x="43" y="183" width="13" height="1" fill="#fff"/>
</g>
<g shape-rendering="crispEdges">
<rect x="94" y="143" width="15" height="40" fill="url(#wTop)"/>
<rect x="94" y="143" width="15" height="1" fill="#b8b8c8" opacity=".8"/>
<rect x="94" y="178" width="15" height="6" fill="#b8c8a0" opacity=".75"/>
<rect x="94" y="184" width="15" height="93" fill="url(#wMid)"/>
<rect x="94" y="277" width="15" height="14" fill="url(#wLow)"/>
<rect x="98" y="276" width="9" height="5" fill="#a29ab2" opacity=".92"/>
<rect x="98" y="273" width="9" height="3" fill="#b0f0e0" opacity=".55"/>
<rect x="94.5" y="291.500" width="14" height="7" fill="#2a2a54" stroke="#68688e"/>
<rect x="91" y="183" width="20" height="1" fill="#fff"/>
</g>
<g shape-rendering="crispEdges">
<rect x="184" y="143" width="15" height="40" fill="url(#wTop)"/>
<rect x="184" y="143" width="15" height="1" fill="#b8b8c8" opacity=".8"/>
<rect x="184" y="178" width="15" height="6" fill="#b8c8a0" opacity=".75"/>
<rect x="184" y="184" width="15" height="93" fill="url(#wMid)"/>
<rect x="184" y="277" width="15" height="14" fill="url(#wLow)"/>
<rect x="188" y="276" width="9" height="5" fill="#a29ab2" opacity=".92"/>
<rect x="188" y="273" width="9" height="3" fill="#b0f0e0" opacity=".55"/>
<rect x="184.5" y="291.500" width="14" height="7" fill="#2a2a54" stroke="#68688e"/>
<rect x="181" y="183" width="20" height="1" fill="#fff"/>
</g>
<g shape-rendering="crispEdges">
<rect x="373" y="143" width="8" height="40" fill="url(#nTop)"/>
<rect x="373" y="143" width="8" height="1" fill="#b8b8c8" opacity=".8"/>
<rect x="373" y="178" width="8" height="6" fill="#b8c8a0" opacity=".75"/>
<rect x="373" y="184" width="8" height="93" fill="url(#nMid)"/>
<rect x="373" y="277" width="8" height="14" fill="url(#wLow)"/>
<rect x="375" y="276" width="5" height="5" fill="#a29ab2" opacity=".92"/>
<rect x="375" y="273" width="4" height="3" fill="#b0f0e0" opacity=".55"/>
<rect x="373.5" y="291.500" width="7" height="7" fill="#2a2a54" stroke="#68688e"/>
<rect x="370" y="183" width="13" height="1" fill="#fff"/>
</g>
<g shape-rendering="crispEdges">
<rect x="417" y="143" width="15" height="40" fill="url(#wTop)"/>
<rect x="417" y="143" width="15" height="1" fill="#b8b8c8" opacity=".8"/>
<rect x="417" y="178" width="15" height="6" fill="#b8c8a0" opacity=".75"/>
<rect x="417" y="184" width="15" height="93" fill="url(#wMid)"/>
<rect x="417" y="277" width="15" height="14" fill="url(#wLow)"/>
<rect x="421" y="276" width="9" height="5" fill="#a29ab2" opacity=".92"/>
<rect x="421" y="273" width="9" height="3" fill="#b0f0e0" opacity=".55"/>
<rect x="417.5" y="291.500" width="14" height="7" fill="#2a2a54" stroke="#68688e"/>
<rect x="414" y="183" width="20" height="1" fill="#fff"/>
</g>
<g shape-rendering="crispEdges">
<rect x="445" y="143" width="15" height="40" fill="url(#wTop)"/>
<rect x="445" y="143" width="15" height="1" fill="#b8b8c8" opacity=".8"/>
<rect x="445" y="178" width="15" height="6" fill="#b8c8a0" opacity=".75"/>
<rect x="445" y="184" width="15" height="93" fill="url(#wMid)"/>
<rect x="445" y="277" width="15" height="14" fill="url(#wLow)"/>
<rect x="449" y="276" width="9" height="5" fill="#a29ab2" opacity=".92"/>
<rect x="449" y="273" width="9" height="3" fill="#b0f0e0" opacity=".55"/>
<rect x="445.5" y="291.500" width="14" height="7" fill="#2a2a54" stroke="#68688e"/>
<rect x="442" y="183" width="20" height="1" fill="#fff"/>
</g>
<g shape-rendering="crispEdges">
<rect x="623" y="143" width="8" height="40" fill="url(#hTop)"/>
<rect x="623" y="143" width="8" height="1" fill="#b8b8c8" opacity=".8"/>
<rect x="623" y="178" width="8" height="6" fill="#b8c8a0" opacity=".75"/>
<rect x="623" y="184" width="8" height="93" fill="url(#hMid)"/>
<rect x="623" y="277" width="8" height="14" fill="url(#wLow)"/>
<rect x="625" y="276" width="5" height="5" fill="#a29ab2" opacity=".92"/>
<rect x="625" y="273" width="4" height="3" fill="#b0f0e0" opacity=".55"/>
<rect x="623.5" y="291.500" width="7" height="7" fill="#2a2a54" stroke="#68688e"/>
<rect x="620" y="183" width="13" height="1" fill="#fff"/>
</g>
<g shape-rendering="crispEdges">
<rect x="634" y="143" width="15" height="40" fill="url(#wTop)"/>
<rect x="634" y="143" width="15" height="1" fill="#b8b8c8" opacity=".8"/>
<rect x="634" y="178" width="15" height="6" fill="#b8c8a0" opacity=".75"/>
<rect x="634" y="184" width="15" height="93" fill="url(#wMid)"/>
<rect x="634" y="277" width="15" height="14" fill="url(#wLow)"/>
<rect x="638" y="276" width="9" height="5" fill="#a29ab2" opacity=".92"/>
<rect x="638" y="273" width="9" height="3" fill="#b0f0e0" opacity=".55"/>
<rect x="634.5" y="291.500" width="14" height="7" fill="#2a2a54" stroke="#68688e"/>
<rect x="631" y="183" width="20" height="1" fill="#fff"/>
</g>
<g shape-rendering="crispEdges">
<rect x="659" y="143" width="15" height="40" fill="url(#wTop)"/>
<rect x="659" y="143" width="15" height="1" fill="#b8b8c8" opacity=".8"/>
<rect x="659" y="178" width="15" height="6" fill="#b8c8a0" opacity=".75"/>
<rect x="659" y="184" width="15" height="93" fill="url(#wMid)"/>
<rect x="659" y="277" width="15" height="14" fill="url(#wLow)"/>
<rect x="663" y="276" width="9" height="5" fill="#a29ab2" opacity=".92"/>
<rect x="663" y="273" width="9" height="3" fill="#b0f0e0" opacity=".55"/>
<rect x="659.5" y="291.500" width="14" height="7" fill="#2a2a54" stroke="#68688e"/>
<rect x="656" y="183" width="20" height="1" fill="#fff"/>
</g>
<g shape-rendering="crispEdges">
<rect x="868" y="143" width="15" height="40" fill="url(#wTop)"/>
<rect x="868" y="143" width="15" height="1" fill="#b8b8c8" opacity=".8"/>
<rect x="868" y="178" width="15" height="6" fill="#b8c8a0" opacity=".75"/>
<rect x="868" y="184" width="15" height="93" fill="url(#wMid)"/>
<rect x="868" y="277" width="15" height="14" fill="url(#wLow)"/>
<rect x="872" y="276" width="9" height="5" fill="#a29ab2" opacity=".92"/>
<rect x="872" y="273" width="9" height="3" fill="#b0f0e0" opacity=".55"/>
<rect x="868.5" y="291.500" width="14" height="7" fill="#2a2a54" stroke="#68688e"/>
<rect x="865" y="183" width="20" height="1" fill="#fff"/>
</g>
<g shape-rendering="crispEdges">
<rect x="891" y="143" width="8" height="40" fill="url(#nTop)"/>
<rect x="891" y="143" width="8" height="1" fill="#b8b8c8" opacity=".8"/>
<rect x="891" y="178" width="8" height="6" fill="#b8c8a0" opacity=".75"/>
<rect x="891" y="184" width="8" height="93" fill="url(#nMid)"/>
<rect x="891" y="277" width="8" height="14" fill="url(#wLow)"/>
<rect x="893" y="276" width="5" height="5" fill="#a29ab2" opacity=".92"/>
<rect x="893" y="273" width="4" height="3" fill="#b0f0e0" opacity=".55"/>
<rect x="891.5" y="291.500" width="7" height="7" fill="#2a2a54" stroke="#68688e"/>
<rect x="888" y="183" width="13" height="1" fill="#fff"/>
</g>
<g shape-rendering="crispEdges">
<rect x="942" y="143" width="15" height="40" fill="url(#wTop)"/>
<rect x="942" y="143" width="15" height="1" fill="#b8b8c8" opacity=".8"/>
<rect x="942" y="178" width="15" height="6" fill="#b8c8a0" opacity=".75"/>
<rect x="942" y="184" width="15" height="93" fill="url(#wMid)"/>
<rect x="942" y="277" width="15" height="14" fill="url(#wLow)"/>
<rect x="946" y="276" width="9" height="5" fill="#a29ab2" opacity=".92"/>
<rect x="946" y="273" width="9" height="3" fill="#b0f0e0" opacity=".55"/>
<rect x="942.5" y="291.500" width="14" height="7" fill="#2a2a54" stroke="#68688e"/>
<rect x="939" y="183" width="20" height="1" fill="#fff"/>
</g>
<g shape-rendering="crispEdges">
<rect x="1126" y="143" width="8" height="40" fill="url(#nTop)"/>
<rect x="1126" y="143" width="8" height="1" fill="#b8b8c8" opacity=".8"/>
<rect x="1126" y="178" width="8" height="6" fill="#b8c8a0" opacity=".75"/>
<rect x="1126" y="184" width="8" height="93" fill="url(#nMid)"/>
<rect x="1126" y="277" width="8" height="14" fill="url(#wLow)"/>
<rect x="1128" y="276" width="5" height="5" fill="#a29ab2" opacity=".92"/>
<rect x="1128" y="273" width="4" height="3" fill="#b0f0e0" opacity=".55"/>
<rect x="1126.5" y="291.500" width="7" height="7" fill="#2a2a54" stroke="#68688e"/>
<rect x="1123" y="183" width="13" height="1" fill="#fff"/>
</g>
<g shape-rendering="crispEdges">
<rect x="1174" y="143" width="15" height="40" fill="url(#wTop)"/>
<rect x="1174" y="143" width="15" height="1" fill="#b8b8c8" opacity=".8"/>
<rect x="1174" y="178" width="15" height="6" fill="#b8c8a0" opacity=".75"/>
<rect x="1174" y="184" width="15" height="93" fill="url(#wMid)"/>
<rect x="1174" y="277" width="15" height="14" fill="url(#wLow)"/>
<rect x="1178" y="276" width="9" height="5" fill="#a29ab2" opacity=".92"/>
<rect x="1178" y="273" width="9" height="3" fill="#b0f0e0" opacity=".55"/>
<rect x="1174.5" y="291.500" width="14" height="7" fill="#2a2a54" stroke="#68688e"/>
<rect x="1171" y="183" width="20" height="1" fill="#fff"/>
</g>
<g shape-rendering="crispEdges">
<rect x="1221" y="143" width="15" height="40" fill="url(#wTop)"/>
<rect x="1221" y="143" width="15" height="1" fill="#b8b8c8" opacity=".8"/>
<rect x="1221" y="178" width="15" height="6" fill="#b8c8a0" opacity=".75"/>
<rect x="1221" y="184" width="15" height="93" fill="url(#wMid)"/>
<rect x="1221" y="277" width="15" height="14" fill="url(#wLow)"/>
<rect x="1225" y="276" width="9" height="5" fill="#a29ab2" opacity=".92"/>
<rect x="1225" y="273" width="9" height="3" fill="#b0f0e0" opacity=".55"/>
<rect x="1221.5" y="291.500" width="14" height="7" fill="#2a2a54" stroke="#68688e"/>
<rect x="1218" y="183" width="20" height="1" fill="#fff"/>
</g>
<path d="M643.500 143V299" stroke="#d0d0d0" stroke-opacity=".75" shape-rendering="crispEdges"/>
<text transform="translate(52.4,210.5) rotate(-68)" font-size="13.500" fill="#fff">FD 0x555</text>
<text transform="translate(100.4,210.5) rotate(-68)" font-size="13.500" fill="#fff">FD 0x123</text>
<text transform="translate(190.4,210.5) rotate(-68)" font-size="13.500" fill="#fff">FD 0x123</text>
<text transform="translate(379.4,210.5) rotate(-68)" font-size="13.500" fill="#fff">FD 0x555</text>
<text transform="translate(423.4,210.5) rotate(-68)" font-size="13.500" fill="#fff">FD 0x123</text>
<text transform="translate(451.4,210.5) rotate(-68)" font-size="13.500" fill="#fff">FD 0x123</text>
<text transform="translate(629.4,210.5) rotate(-68)" font-size="13.500" fill="#fff">FD 0x555</text>
<text transform="translate(640.4,210.5) rotate(-68)" font-size="13.500" fill="#fff">FD 0x123</text>
<text transform="translate(665.4,210.5) rotate(-68)" font-size="13.500" fill="#fff">FD 0x123</text>
<text transform="translate(874.4,210.5) rotate(-68)" font-size="13.500" fill="#fff">FD 0x123</text>
<text transform="translate(897.4,210.5) rotate(-68)" font-size="13.500" fill="#fff">FD 0x555</text>
<text transform="translate(948.4,210.5) rotate(-68)" font-size="13.500" fill="#fff">FD 0x123</text>
<text transform="translate(1132.4,210.5) rotate(-68)" font-size="13.500" fill="#fff">FD 0x555</text>
<text transform="translate(1180.4,210.5) rotate(-68)" font-size="13.500" fill="#fff">FD 0x123</text>
<text transform="translate(1227.4,210.5) rotate(-68)" font-size="13.500" fill="#fff">FD 0x123</text>
<text x="3" y="178" font-size="9.500" font-weight="bold" fill="#e0dc28">M1</text>
<path d="M7 180.800h10.500" stroke="#f0ec20" stroke-width="1.800"/>
<path d="M638.500 323.500l4 8.500h-8z" fill="#f4f020"/>
<g shape-rendering="crispEdges" fill="none">
<line x1="142.5" y1="337" x2="142.5" y2="621" stroke="#9c9c9c" stroke-dasharray="1 1"/>
<line x1="267.5" y1="337" x2="267.5" y2="621" stroke="#9c9c9c" stroke-dasharray="1 1"/>
<line x1="393.5" y1="337" x2="393.5" y2="621" stroke="#9c9c9c" stroke-dasharray="1 1"/>
<line x1="518.5" y1="337" x2="518.5" y2="621" stroke="#9c9c9c" stroke-dasharray="1 1"/>
<line x1="768.5" y1="337" x2="768.5" y2="621" stroke="#9c9c9c" stroke-dasharray="1 1"/>
<line x1="893.5" y1="337" x2="893.5" y2="621" stroke="#9c9c9c" stroke-dasharray="1 1"/>
<line x1="1019.5" y1="337" x2="1019.5" y2="621" stroke="#9c9c9c" stroke-dasharray="1 1"/>
<line x1="1144.5" y1="337" x2="1144.5" y2="621" stroke="#9c9c9c" stroke-dasharray="1 1"/>
<line x1="18" y1="371.5" x2="1269" y2="371.5" stroke="#8a8a8a" stroke-dasharray="1 1"/>
<line x1="18" y1="407.5" x2="1269" y2="407.5" stroke="#8a8a8a" stroke-dasharray="1 1"/>
<line x1="18" y1="443.5" x2="1269" y2="443.5" stroke="#8a8a8a" stroke-dasharray="1 1"/>
<line x1="18" y1="514.5" x2="1269" y2="514.5" stroke="#8a8a8a" stroke-dasharray="1 1"/>
<line x1="18" y1="550.5" x2="1269" y2="550.5" stroke="#8a8a8a" stroke-dasharray="1 1"/>
<line x1="18" y1="586.5" x2="1269" y2="586.5" stroke="#8a8a8a" stroke-dasharray="1 1"/>
<line x1="643.5" y1="336" x2="643.5" y2="621" stroke="#848484"/>
<line x1="17" y1="478.5" x2="1269" y2="478.5" stroke="#4a4a4a"/>
<path d="M641.0 343.5h5 M641.0 350.5h5 M641.0 357.5h5 M641.0 364.5h5 M641.0 372.5h5 M641.0 379.5h5 M641.0 386.5h5 M641.0 393.5h5 M641.0 400.5h5 M641.0 407.5h5 M641.0 414.5h5 M641.0 422.5h5 M641.0 429.5h5 M641.0 436.5h5 M641.0 443.5h5 M641.0 450.5h5 M641.0 457.5h5 M641.0 464.5h5 M641.0 471.5h5 M641.0 478.5h5 M641.0 486.5h5 M641.0 493.5h5 M641.0 500.5h5 M641.0 507.5h5 M641.0 514.5h5 M641.0 521.5h5 M641.0 528.5h5 M641.0 536.5h5 M641.0 543.5h5 M641.0 550.5h5 M641.0 557.5h5 M641.0 564.5h5 M641.0 571.5h5 M641.0 578.5h5 M641.0 585.5h5 M641.0 592.5h5 M641.0 600.5h5 M641.0 607.5h5 M641.0 614.5h5" stroke="#848484"/>
<path d="M42.5 476.0v5 M67.5 476.0v5 M92.5 476.0v5 M117.5 476.0v5 M142.5 476.0v5 M167.5 476.0v5 M192.5 476.0v5 M217.5 476.0v5 M242.5 476.0v5 M267.5 476.0v5 M292.5 476.0v5 M317.5 476.0v5 M343.5 476.0v5 M368.5 476.0v5 M393.5 476.0v5 M418.5 476.0v5 M443.5 476.0v5 M468.5 476.0v5 M493.5 476.0v5 M518.5 476.0v5 M543.5 476.0v5 M568.5 476.0v5 M593.5 476.0v5 M618.5 476.0v5 M643.5 476.0v5 M668.5 476.0v5 M693.5 476.0v5 M718.5 476.0v5 M743.5 476.0v5 M768.5 476.0v5 M793.5 476.0v5 M818.5 476.0v5 M843.5 476.0v5 M868.5 476.0v5 M893.5 476.0v5 M918.5 476.0v5 M943.5 476.0v5 M969.5 476.0v5 M994.5 476.0v5 M1019.5 476.0v5 M1044.5 476.0v5 M1069.5 476.0v5 M1094.5 476.0v5 M1119.5 476.0v5 M1144.5 476.0v5 M1169.5 476.0v5 M1194.5 476.0v5 M1219.5 476.0v5 M1244.5 476.0v5" stroke="#5e5e5e"/>
<path d="M42 389.5h1 M67 389.5h1 M92 389.5h1 M117 389.5h1 M167 389.5h1 M192 389.5h1 M217 389.5h1 M242 389.5h1 M292 389.5h1 M317 389.5h1 M343 389.5h1 M368 389.5h1 M418 389.5h1 M443 389.5h1 M468 389.5h1 M493 389.5h1 M543 389.5h1 M568 389.5h1 M593 389.5h1 M618 389.5h1 M668 389.5h1 M693 389.5h1 M718 389.5h1 M743 389.5h1 M793 389.5h1 M818 389.5h1 M843 389.5h1 M868 389.5h1 M918 389.5h1 M943 389.5h1 M969 389.5h1 M994 389.5h1 M1044 389.5h1 M1069 389.5h1 M1094 389.5h1 M1119 389.5h1 M1169 389.5h1 M1194 389.5h1 M1219 389.5h1 M1244 389.5h1 M42 568.5h1 M67 568.5h1 M92 568.5h1 M117 568.5h1 M167 568.5h1 M192 568.5h1 M217 568.5h1 M242 568.5h1 M292 568.5h1 M317 568.5h1 M343 568.5h1 M368 568.5h1 M418 568.5h1 M443 568.5h1 M468 568.5h1 M493 568.5h1 M543 568.5h1 M568 568.5h1 M593 568.5h1 M618 568.5h1 M668 568.5h1 M693 568.5h1 M718 568.5h1 M743 568.5h1 M793 568.5h1 M818 568.5h1 M843 568.5h1 M868 568.5h1 M918 568.5h1 M943 568.5h1 M969 568.5h1 M994 568.5h1 M1044 568.5h1 M1069 568.5h1 M1094 568.5h1 M1119 568.5h1 M1169 568.5h1 M1194 568.5h1 M1219 568.5h1 M1244 568.5h1" stroke="#686868"/>
<rect x="17.5" y="336.5" width="1252" height="285" stroke="#888888"/>
</g>
<text x="5" y="432" font-size="10" fill="#e8e428">Z1</text>
<path d="M7 435h11" stroke="#f8f420" stroke-width="2"/>
<line x1="18" y1="482.500" x2="1269" y2="482.500" stroke="#a49ce0" stroke-dasharray="4 4" shape-rendering="crispEdges"/>
<g shape-rendering="crispEdges">
<rect x="63.500" y="382.500" width="1159" height="170" fill="#25274c" fill-opacity=".96" stroke="#4c4a80"/>
<rect x="63" y="397" width="37" height="149" fill="#1c6a90"/>
<rect x="100" y="397" width="399" height="149" fill="#7a3a3c"/>
<rect x="499" y="397" width="36" height="149" fill="#20688e"/>
<rect x="535" y="397" width="36" height="149" fill="#20688e"/>
<rect x="571" y="397" width="37" height="149" fill="#20688e"/>
<rect x="608" y="397" width="36" height="149" fill="#20688e"/>
<rect x="644" y="397" width="31" height="149" fill="#20688e"/>
<rect x="675" y="397" width="11" height="149" fill="#1c7c34"/>
<rect x="686" y="397" width="20" height="149" fill="#1c6c8c"/>
<rect x="706" y="397" width="18" height="149" fill="#1c6c8c"/>
<rect x="724" y="397" width="18" height="149" fill="#1c6c8c"/>
<rect x="742" y="397" width="19" height="149" fill="#1c6c8c"/>
<rect x="761" y="397" width="20" height="149" fill="#1c6c8c"/>
<rect x="781" y="397" width="18" height="149" fill="#1c6c8c"/>
<rect x="799" y="397" width="18" height="149" fill="#1c6c8c"/>
<rect x="817" y="397" width="19" height="149" fill="#1c6c8c"/>
<rect x="836" y="397" width="50" height="149" fill="#1c1c7c"/>
<rect x="886" y="397" width="10" height="149" fill="#20688e"/>
<rect x="896" y="397" width="73" height="149" fill="#6c6a30"/>
<rect x="969" y="397" width="254" height="149" fill="#20688e"/>
<path d="M63 397.500H100M63 545.500H100" stroke="#3c9ce8" fill="none"/>
<rect x="62" y="397" width="2" height="149" fill="#3c9ce8"/>
<path d="M100 397.500H499M100 545.500H499" stroke="#e06434" fill="none"/>
<rect x="99" y="397" width="2" height="149" fill="#e06434"/>
<path d="M499 397.500H535M499 545.500H535" stroke="#38a0f0" fill="none"/>
<rect x="498" y="397" width="2" height="149" fill="#38a0f0"/>
<path d="M535 397.500H571M535 545.500H571" stroke="#38a0f0" fill="none"/>
<rect x="534" y="397" width="2" height="149" fill="#38a0f0"/>
<path d="M571 397.500H608M571 545.500H608" stroke="#38a0f0" fill="none"/>
<rect x="570" y="397" width="2" height="149" fill="#38a0f0"/>
<path d="M608 397.500H644M608 545.500H644" stroke="#38a0f0" fill="none"/>
<rect x="607" y="397" width="2" height="149" fill="#38a0f0"/>
<path d="M644 397.500H675M644 545.500H675" stroke="#38a0f0" fill="none"/>
<rect x="643" y="397" width="2" height="149" fill="#38a0f0"/>
<path d="M675 397.500H686M675 545.500H686" stroke="#30c850" fill="none"/>
<rect x="674" y="397" width="2" height="149" fill="#30c850"/>
<path d="M686 397.500H706M686 545.500H706" stroke="#28b8d8" fill="none"/>
<rect x="685" y="397" width="2" height="149" fill="#28b8d8"/>
<path d="M706 397.500H724M706 545.500H724" stroke="#28b8d8" fill="none"/>
<rect x="705" y="397" width="2" height="149" fill="#28b8d8"/>
<path d="M724 397.500H742M724 545.500H742" stroke="#28b8d8" fill="none"/>
<rect x="723" y="397" width="2" height="149" fill="#28b8d8"/>
<path d="M742 397.500H761M742 545.500H761" stroke="#28b8d8" fill="none"/>
<rect x="741" y="397" width="2" height="149" fill="#28b8d8"/>
<path d="M761 397.500H781M761 545.500H781" stroke="#28b8d8" fill="none"/>
<rect x="760" y="397" width="2" height="149" fill="#28b8d8"/>
<path d="M781 397.500H799M781 545.500H799" stroke="#28b8d8" fill="none"/>
<rect x="780" y="397" width="2" height="149" fill="#28b8d8"/>
<path d="M799 397.500H817M799 545.500H817" stroke="#28b8d8" fill="none"/>
<rect x="798" y="397" width="2" height="149" fill="#28b8d8"/>
<path d="M817 397.500H836M817 545.500H836" stroke="#28b8d8" fill="none"/>
<rect x="816" y="397" width="2" height="149" fill="#28b8d8"/>
<path d="M836 397.500H886M836 545.500H886" stroke="#2828a0" fill="none"/>
<rect x="835" y="397" width="2" height="149" fill="#2828a0"/>
<path d="M886 397.500H896M886 545.500H896" stroke="#38a0f0" fill="none"/>
<rect x="885" y="397" width="2" height="149" fill="#38a0f0"/>
<path d="M896 397.500H969M896 545.500H969" stroke="#a8a440" fill="none"/>
<rect x="895" y="397" width="2" height="149" fill="#a8a440"/>
<path d="M969 397.500H1223M969 545.500H1223" stroke="#38a0f0" fill="none"/>
<rect x="968" y="397" width="2" height="149" fill="#38a0f0"/>
<rect x="1222" y="397" width="2" height="149" fill="#38a0f0"/>
</g>
<g shape-rendering="crispEdges">
<rect x="63" y="427" width="37" height="105" fill="#6c6688"/>
<path d="M63 427.500H100M63 531.500H100" stroke="#7468e0" fill="none"/>
<rect x="62" y="427" width="2" height="105" fill="#7468e0"/>
<rect x="99" y="427" width="2" height="105" fill="#7468e0"/>
<rect x="100" y="427" width="36" height="105" fill="#6a3282"/>
<path d="M100 427.500H136M100 531.500H136" stroke="#e8288c" fill="none"/>
<rect x="99" y="427" width="2" height="105" fill="#e8288c"/>
<rect x="135" y="427" width="2" height="105" fill="#e8288c"/>
<rect x="136" y="427" width="36" height="105" fill="#6a3282"/>
<path d="M136 427.500H172M136 531.500H172" stroke="#e8288c" fill="none"/>
<rect x="135" y="427" width="2" height="105" fill="#e8288c"/>
<rect x="171" y="427" width="2" height="105" fill="#e8288c"/>
<rect x="172" y="427" width="37" height="105" fill="#6a3282"/>
<path d="M172 427.500H209M172 531.500H209" stroke="#e8288c" fill="none"/>
<rect x="171" y="427" width="2" height="105" fill="#e8288c"/>
<rect x="208" y="427" width="2" height="105" fill="#e8288c"/>
<rect x="209" y="427" width="36" height="105" fill="#6a3282"/>
<path d="M209 427.500H245M209 531.500H245" stroke="#e8288c" fill="none"/>
<rect x="208" y="427" width="2" height="105" fill="#e8288c"/>
<rect x="244" y="427" width="2" height="105" fill="#e8288c"/>
<rect x="245" y="427" width="36" height="105" fill="#6a3282"/>
<path d="M245 427.500H281M245 531.500H281" stroke="#e8288c" fill="none"/>
<rect x="244" y="427" width="2" height="105" fill="#e8288c"/>
<rect x="280" y="427" width="2" height="105" fill="#e8288c"/>
<rect x="281" y="427" width="36" height="105" fill="#6a3282"/>
<path d="M281 427.500H317M281 531.500H317" stroke="#e8288c" fill="none"/>
<rect x="280" y="427" width="2" height="105" fill="#e8288c"/>
<rect x="316" y="427" width="2" height="105" fill="#e8288c"/>
<rect x="317" y="427" width="37" height="105" fill="#6a3282"/>
<path d="M317 427.500H354M317 531.500H354" stroke="#e8288c" fill="none"/>
<rect x="316" y="427" width="2" height="105" fill="#e8288c"/>
<rect x="353" y="427" width="2" height="105" fill="#e8288c"/>
<rect x="354" y="427" width="36" height="105" fill="#6a3282"/>
<path d="M354 427.500H390M354 531.500H390" stroke="#e8288c" fill="none"/>
<rect x="353" y="427" width="2" height="105" fill="#e8288c"/>
<rect x="389" y="427" width="2" height="105" fill="#e8288c"/>
<rect x="390" y="427" width="36" height="105" fill="#6a3282"/>
<path d="M390 427.500H426M390 531.500H426" stroke="#e8288c" fill="none"/>
<rect x="389" y="427" width="2" height="105" fill="#e8288c"/>
<rect x="425" y="427" width="2" height="105" fill="#e8288c"/>
<rect x="426" y="427" width="37" height="105" fill="#6a3282"/>
<path d="M426 427.500H463M426 531.500H463" stroke="#e8288c" fill="none"/>
<rect x="425" y="427" width="2" height="105" fill="#e8288c"/>
<rect x="462" y="427" width="2" height="105" fill="#e8288c"/>
<rect x="463" y="427" width="36" height="105" fill="#6a3282"/>
<path d="M463 427.500H499M463 531.500H499" stroke="#e8288c" fill="none"/>
<rect x="462" y="427" width="2" height="105" fill="#e8288c"/>
<rect x="498" y="427" width="2" height="105" fill="#e8288c"/>
<rect x="499" y="427" width="36" height="105" fill="#6c6688"/>
<path d="M499 427.500H535M499 531.500H535" stroke="#a880f0" fill="none"/>
<rect x="498" y="427" width="2" height="105" fill="#a880f0"/>
<rect x="534" y="427" width="2" height="105" fill="#a880f0"/>
<rect x="535" y="427" width="36" height="105" fill="#6c6688"/>
<path d="M535 427.500H571M535 531.500H571" stroke="#a880f0" fill="none"/>
<rect x="534" y="427" width="2" height="105" fill="#a880f0"/>
<rect x="570" y="427" width="2" height="105" fill="#a880f0"/>
<rect x="571" y="427" width="37" height="105" fill="#6c6688"/>
<path d="M571 427.500H608M571 531.500H608" stroke="#a880f0" fill="none"/>
<rect x="570" y="427" width="2" height="105" fill="#a880f0"/>
<rect x="607" y="427" width="2" height="105" fill="#a880f0"/>
<rect x="608" y="427" width="36" height="105" fill="#6c6688"/>
<path d="M608 427.500H644M608 531.500H644" stroke="#a880f0" fill="none"/>
<rect x="607" y="427" width="2" height="105" fill="#a880f0"/>
<rect x="643" y="427" width="2" height="105" fill="#a880f0"/>
<rect x="644" y="427" width="31" height="105" fill="#6c6688"/>
<path d="M644 427.500H675M644 531.500H675" stroke="#a880f0" fill="none"/>
<rect x="643" y="427" width="2" height="105" fill="#a880f0"/>
<rect x="674" y="427" width="2" height="105" fill="#a880f0"/>
<rect x="675" y="427" width="212" height="105" fill="#a850ec"/>
<rect x="836" y="427" width="50" height="105" fill="#9a22ee"/>
<rect x="886" y="427" width="10" height="105" fill="#6c6688"/>
<path d="M886 427.500H896M886 531.500H896" stroke="#a880f0" fill="none"/>
<rect x="885" y="427" width="2" height="105" fill="#a880f0"/>
<rect x="895" y="427" width="2" height="105" fill="#a880f0"/>
<rect x="896" y="427" width="37" height="105" fill="#6c6688"/>
<rect x="896.5" y="427.500" width="37" height="104" fill="none" stroke="#e8607c"/>
<rect x="933" y="427" width="36" height="105" fill="#6c6688"/>
<rect x="933.5" y="427.500" width="36" height="104" fill="none" stroke="#e8607c"/>
<rect x="969" y="427" width="36" height="105" fill="#6c6688"/>
<path d="M969 427.500H1005M969 531.500H1005" stroke="#b060f0" fill="none"/>
<rect x="968" y="427" width="2" height="105" fill="#b060f0"/>
<rect x="1004" y="427" width="2" height="105" fill="#b060f0"/>
<rect x="1005" y="427" width="37" height="105" fill="#6c6688"/>
<path d="M1005 427.500H1042M1005 531.500H1042" stroke="#b060f0" fill="none"/>
<rect x="1004" y="427" width="2" height="105" fill="#b060f0"/>
<rect x="1041" y="427" width="2" height="105" fill="#b060f0"/>
<rect x="1042" y="427" width="36" height="105" fill="#6c6688"/>
<path d="M1042 427.500H1078M1042 531.500H1078" stroke="#b060f0" fill="none"/>
<rect x="1041" y="427" width="2" height="105" fill="#b060f0"/>
<rect x="1077" y="427" width="2" height="105" fill="#b060f0"/>
<rect x="1078" y="427" width="36" height="105" fill="#6c6688"/>
<path d="M1078 427.500H1114M1078 531.500H1114" stroke="#b060f0" fill="none"/>
<rect x="1077" y="427" width="2" height="105" fill="#b060f0"/>
<rect x="1113" y="427" width="2" height="105" fill="#b060f0"/>
<rect x="1114" y="427" width="36" height="105" fill="#6c6688"/>
<path d="M1114 427.500H1150M1114 531.500H1150" stroke="#b060f0" fill="none"/>
<rect x="1113" y="427" width="2" height="105" fill="#b060f0"/>
<rect x="1149" y="427" width="2" height="105" fill="#b060f0"/>
<rect x="1150" y="427" width="37" height="105" fill="#6c6688"/>
<path d="M1150 427.500H1187M1150 531.500H1187" stroke="#b060f0" fill="none"/>
<rect x="1149" y="427" width="2" height="105" fill="#b060f0"/>
<rect x="1186" y="427" width="2" height="105" fill="#b060f0"/>
<rect x="1187" y="427" width="36" height="105" fill="#6c6688"/>
<path d="M1187 427.500H1223M1187 531.500H1223" stroke="#b060f0" fill="none"/>
<rect x="1186" y="427" width="2" height="105" fill="#b060f0"/>
<rect x="1222" y="427" width="2" height="105" fill="#b060f0"/>
</g>
<g shape-rendering="crispEdges">
<rect x="675.0" y="427" width="2.27" height="105" fill="#c880ff" opacity=".45"/>
<rect x="679.5" y="427" width="2.27" height="105" fill="#c880ff" opacity=".45"/>
<rect x="684.1" y="427" width="2.27" height="105" fill="#c880ff" opacity=".45"/>
<rect x="688.6" y="427" width="2.27" height="105" fill="#c880ff" opacity=".45"/>
<rect x="693.2" y="427" width="2.27" height="105" fill="#c880ff" opacity=".45"/>
<rect x="697.7" y="427" width="2.27" height="105" fill="#c880ff" opacity=".45"/>
<rect x="702.2" y="427" width="2.27" height="105" fill="#c880ff" opacity=".45"/>
<rect x="706.8" y="427" width="2.27" height="105" fill="#c880ff" opacity=".45"/>
<rect x="711.3" y="427" width="2.27" height="105" fill="#c880ff" opacity=".45"/>
<rect x="715.8" y="427" width="2.27" height="105" fill="#c880ff" opacity=".45"/>
<rect x="720.4" y="427" width="2.27" height="105" fill="#c880ff" opacity=".45"/>
<rect x="724.9" y="427" width="2.27" height="105" fill="#c880ff" opacity=".45"/>
<rect x="729.5" y="427" width="2.27" height="105" fill="#c880ff" opacity=".45"/>
<rect x="734.0" y="427" width="2.27" height="105" fill="#c880ff" opacity=".45"/>
<rect x="738.5" y="427" width="2.27" height="105" fill="#c880ff" opacity=".45"/>
<rect x="743.1" y="427" width="2.27" height="105" fill="#c880ff" opacity=".45"/>
<rect x="747.6" y="427" width="2.27" height="105" fill="#c880ff" opacity=".45"/>
<rect x="752.1" y="427" width="2.27" height="105" fill="#c880ff" opacity=".45"/>
<rect x="756.7" y="427" width="2.27" height="105" fill="#c880ff" opacity=".45"/>
<rect x="761.2" y="427" width="2.27" height="105" fill="#c880ff" opacity=".45"/>
<rect x="765.8" y="427" width="2.27" height="105" fill="#c880ff" opacity=".45"/>
<rect x="770.3" y="427" width="2.27" height="105" fill="#c880ff" opacity=".45"/>
<rect x="774.8" y="427" width="2.27" height="105" fill="#c880ff" opacity=".45"/>
<rect x="779.4" y="427" width="2.27" height="105" fill="#c880ff" opacity=".45"/>
<rect x="783.9" y="427" width="2.27" height="105" fill="#c880ff" opacity=".45"/>
<rect x="788.4" y="427" width="2.27" height="105" fill="#c880ff" opacity=".45"/>
<rect x="793.0" y="427" width="2.27" height="105" fill="#c880ff" opacity=".45"/>
<rect x="797.5" y="427" width="2.27" height="105" fill="#c880ff" opacity=".45"/>
<rect x="802.1" y="427" width="2.27" height="105" fill="#c880ff" opacity=".45"/>
<rect x="806.6" y="427" width="2.27" height="105" fill="#c880ff" opacity=".45"/>
<rect x="811.1" y="427" width="2.27" height="105" fill="#c880ff" opacity=".45"/>
<rect x="815.7" y="427" width="2.27" height="105" fill="#c880ff" opacity=".45"/>
<rect x="820.2" y="427" width="2.27" height="105" fill="#c880ff" opacity=".45"/>
<rect x="824.7" y="427" width="2.27" height="105" fill="#c880ff" opacity=".45"/>
<rect x="829.3" y="427" width="2.27" height="105" fill="#c880ff" opacity=".45"/>
<rect x="833.8" y="427" width="2.27" height="105" fill="#c880ff" opacity=".45"/>
<rect x="838.4" y="427" width="2.27" height="105" fill="#c880ff" opacity=".45"/>
<rect x="842.9" y="427" width="2.27" height="105" fill="#c880ff" opacity=".45"/>
<rect x="847.4" y="427" width="2.27" height="105" fill="#c880ff" opacity=".45"/>
<rect x="852.0" y="427" width="2.27" height="105" fill="#c880ff" opacity=".45"/>
<rect x="856.5" y="427" width="2.27" height="105" fill="#c880ff" opacity=".45"/>
<rect x="861.0" y="427" width="2.27" height="105" fill="#c880ff" opacity=".45"/>
<rect x="865.6" y="427" width="2.27" height="105" fill="#c880ff" opacity=".45"/>
<rect x="870.1" y="427" width="2.27" height="105" fill="#c880ff" opacity=".45"/>
<rect x="874.7" y="427" width="2.27" height="105" fill="#c880ff" opacity=".45"/>
<rect x="879.2" y="427" width="2.27" height="105" fill="#c880ff" opacity=".45"/>
<rect x="883.7" y="427" width="2.27" height="105" fill="#c880ff" opacity=".45"/>
</g>
<rect x="685" y="427" width="2" height="105" fill="#30c0e0" opacity=".38" shape-rendering="crispEdges"/>
<rect x="705" y="427" width="2" height="105" fill="#30c0e0" opacity=".38" shape-rendering="crispEdges"/>
<rect x="723" y="427" width="2" height="105" fill="#30c0e0" opacity=".38" shape-rendering="crispEdges"/>
<rect x="741" y="427" width="2" height="105" fill="#30c0e0" opacity=".38" shape-rendering="crispEdges"/>
<rect x="760" y="427" width="2" height="105" fill="#30c0e0" opacity=".38" shape-rendering="crispEdges"/>
<rect x="780" y="427" width="2" height="105" fill="#30c0e0" opacity=".38" shape-rendering="crispEdges"/>
<rect x="798" y="427" width="2" height="105" fill="#30c0e0" opacity=".38" shape-rendering="crispEdges"/>
<rect x="816" y="427" width="2" height="105" fill="#30c0e0" opacity=".38" shape-rendering="crispEdges"/>
<rect x="835" y="427" width="2" height="105" fill="#30c0e0" opacity=".38" shape-rendering="crispEdges"/>
<path d="M675 478.500H886" stroke="#ffb8ff" stroke-opacity=".55" shape-rendering="crispEdges"/>
<rect x="691.2" y="412" width="1.600" height="125" fill="#d0f040"/>
<rect x="768.4" y="412" width="1.600" height="125" fill="#d0f040"/>
<rect x="836.4" y="412" width="1.600" height="125" fill="#a8a090"/>
<rect x="847.8" y="412" width="1.600" height="125" fill="#a8a090"/>
<rect x="859.1" y="412" width="1.600" height="125" fill="#a8a090"/>
<rect x="870.5" y="412" width="1.600" height="125" fill="#a8a090"/>
<rect x="881.8" y="412" width="1.600" height="125" fill="#a8a090"/>
<text x="643" y="393" font-size="11" text-anchor="middle" fill="#fff" >FD 0x555</text>
<text x="82.0" y="408" font-size="11" text-anchor="middle" fill="#fff" >SOF</text>
<text x="300.0" y="408" font-size="11" text-anchor="middle" fill="#fff" >ID - Identifier = 0x555</text>
<text x="517.5" y="408" font-size="11" text-anchor="middle" fill="#fff" >r1</text>
<text x="553.5" y="408" font-size="11" text-anchor="middle" fill="#fff" >IDE</text>
<text x="590.0" y="408" font-size="11" text-anchor="middle" fill="#fff" >EDL</text>
<text x="626.5" y="408" font-size="11" text-anchor="middle" fill="#fff" >r0</text>
<text x="660.0" y="408" font-size="11" text-anchor="middle" fill="#fff" >BRS</text>
<text x="681.0" y="408" font-size="11" text-anchor="middle" fill="#fff" >8</text>
<text x="696.5" y="408" font-size="11" text-anchor="middle" fill="#fff" >11</text>
<text x="715.5" y="408" font-size="11" text-anchor="middle" fill="#fff" >12</text>
<text x="733.5" y="408" font-size="11" text-anchor="middle" fill="#fff" >13</text>
<text x="752.0" y="408" font-size="11" text-anchor="middle" fill="#fff" >14</text>
<text x="771.5" y="408" font-size="11" text-anchor="middle" fill="#fff" >15</text>
<text x="790.5" y="408" font-size="11" text-anchor="middle" fill="#fff" >16</text>
<text x="808.5" y="408" font-size="11" text-anchor="middle" fill="#fff" >17</text>
<text x="827.0" y="408" font-size="11" text-anchor="middle" fill="#fff" >18</text>
<text x="861.5" y="408" font-size="11" text-anchor="middle" fill="#fff" >0x9988</text>
<text x="933.0" y="408" font-size="11" text-anchor="middle" fill="#fff" >ACK</text>
<text x="1096.5" y="408" font-size="11" text-anchor="middle" fill="#fff" >EOF - End Of Frame</text>
<text x="81.545" y="438" font-size="11" text-anchor="middle" fill="#fff" >0</text>
<text x="117.835" y="438" font-size="11" text-anchor="middle" fill="#fff" >1</text>
<text x="154.125" y="438" font-size="11" text-anchor="middle" fill="#fff" >2</text>
<text x="190.41500000000002" y="438" font-size="11" text-anchor="middle" fill="#fff" >3</text>
<text x="226.70499999999998" y="438" font-size="11" text-anchor="middle" fill="#fff" >4</text>
<text x="262.995" y="438" font-size="11" text-anchor="middle" fill="#fff" >5</text>
<text x="299.28499999999997" y="438" font-size="11" text-anchor="middle" fill="#fff" >6</text>
<text x="335.575" y="438" font-size="11" text-anchor="middle" fill="#fff" >7</text>
<text x="371.865" y="438" font-size="11" text-anchor="middle" fill="#fff" >8</text>
<text x="408.155" y="438" font-size="11" text-anchor="middle" fill="#fff" >9</text>
<text x="444.44499999999994" y="438" font-size="11" text-anchor="middle" fill="#fff" >10</text>
<text x="480.735" y="438" font-size="11" text-anchor="middle" fill="#fff" >11</text>
<text x="517.025" y="438" font-size="11" text-anchor="middle" fill="#fff" >12</text>
<text x="553.315" y="438" font-size="11" text-anchor="middle" fill="#fff" >13</text>
<text x="589.605" y="438" font-size="11" text-anchor="middle" fill="#fff" >14</text>
<text x="625.895" y="438" font-size="11" text-anchor="middle" fill="#fff" >15</text>
<text x="659.5" y="438" font-size="11" text-anchor="middle" fill="#fff" >16</text>
<text x="914.5" y="438" font-size="11" text-anchor="middle" fill="#fff" >109</text>
<text x="951" y="438" font-size="11" text-anchor="middle" fill="#fff" >110</text>
<text x="987.145" y="438" font-size="11" text-anchor="middle" fill="#fff" >111</text>
<text x="1023.435" y="438" font-size="11" text-anchor="middle" fill="#fff" >112</text>
<text x="1059.725" y="438" font-size="11" text-anchor="middle" fill="#fff" >113</text>
<text x="1096.015" y="438" font-size="11" text-anchor="middle" fill="#fff" >114</text>
<text x="1132.305" y="438" font-size="11" text-anchor="middle" fill="#fff" >115</text>
<text x="1168.595" y="438" font-size="11" text-anchor="middle" fill="#fff" >116</text>
<text x="1204.885" y="438" font-size="11" text-anchor="middle" fill="#fff" >117</text>
<clipPath id="fc"><rect x="63" y="382" width="1161" height="171"/></clipPath>
<g clip-path="url(#fc)" opacity=".2"><g shape-rendering="crispEdges" fill="none">
<line x1="142.5" y1="337" x2="142.5" y2="621" stroke="#e8e0ff" stroke-dasharray="1 1"/>
<line x1="267.5" y1="337" x2="267.5" y2="621" stroke="#e8e0ff" stroke-dasharray="1 1"/>
<line x1="393.5" y1="337" x2="393.5" y2="621" stroke="#e8e0ff" stroke-dasharray="1 1"/>
<line x1="518.5" y1="337" x2="518.5" y2="621" stroke="#e8e0ff" stroke-dasharray="1 1"/>
<line x1="768.5" y1="337" x2="768.5" y2="621" stroke="#e8e0ff" stroke-dasharray="1 1"/>
<line x1="893.5" y1="337" x2="893.5" y2="621" stroke="#e8e0ff" stroke-dasharray="1 1"/>
<line x1="1019.5" y1="337" x2="1019.5" y2="621" stroke="#e8e0ff" stroke-dasharray="1 1"/>
<line x1="1144.5" y1="337" x2="1144.5" y2="621" stroke="#e8e0ff" stroke-dasharray="1 1"/>
<line x1="18" y1="371.5" x2="1269" y2="371.5" stroke="#e8e0ff" stroke-dasharray="1 1"/>
<line x1="18" y1="407.5" x2="1269" y2="407.5" stroke="#e8e0ff" stroke-dasharray="1 1"/>
<line x1="18" y1="443.5" x2="1269" y2="443.5" stroke="#e8e0ff" stroke-dasharray="1 1"/>
<line x1="18" y1="514.5" x2="1269" y2="514.5" stroke="#e8e0ff" stroke-dasharray="1 1"/>
<line x1="18" y1="550.5" x2="1269" y2="550.5" stroke="#e8e0ff" stroke-dasharray="1 1"/>
<line x1="18" y1="586.5" x2="1269" y2="586.5" stroke="#e8e0ff" stroke-dasharray="1 1"/>
<line x1="643.5" y1="336" x2="643.5" y2="621" stroke="#d0c8f0"/>
<path d="M641.0 343.5h5 M641.0 350.5h5 M641.0 357.5h5 M641.0 364.5h5 M641.0 372.5h5 M641.0 379.5h5 M641.0 386.5h5 M641.0 393.5h5 M641.0 400.5h5 M641.0 407.5h5 M641.0 414.5h5 M641.0 422.5h5 M641.0 429.5h5 M641.0 436.5h5 M641.0 443.5h5 M641.0 450.5h5 M641.0 457.5h5 M641.0 464.5h5 M641.0 471.5h5 M641.0 478.5h5 M641.0 486.5h5 M641.0 493.5h5 M641.0 500.5h5 M641.0 507.5h5 M641.0 514.5h5 M641.0 521.5h5 M641.0 528.5h5 M641.0 536.5h5 M641.0 543.5h5 M641.0 550.5h5 M641.0 557.5h5 M641.0 564.5h5 M641.0 571.5h5 M641.0 578.5h5 M641.0 585.5h5 M641.0 592.5h5 M641.0 600.5h5 M641.0 607.5h5 M641.0 614.5h5" stroke="#d0c8f0"/>
<path d="M42 389.5h1 M67 389.5h1 M92 389.5h1 M117 389.5h1 M167 389.5h1 M192 389.5h1 M217 389.5h1 M242 389.5h1 M292 389.5h1 M317 389.5h1 M343 389.5h1 M368 389.5h1 M418 389.5h1 M443 389.5h1 M468 389.5h1 M493 389.5h1 M543 389.5h1 M568 389.5h1 M593 389.5h1 M618 389.5h1 M668 389.5h1 M693 389.5h1 M718 389.5h1 M743 389.5h1 M793 389.5h1 M818 389.5h1 M843 389.5h1 M868 389.5h1 M918 389.5h1 M943 389.5h1 M969 389.5h1 M994 389.5h1 M1044 389.5h1 M1069 389.5h1 M1094 389.5h1 M1119 389.5h1 M1169 389.5h1 M1194 389.5h1 M1219 389.5h1 M1244 389.5h1 M42 568.5h1 M67 568.5h1 M92 568.5h1 M117 568.5h1 M167 568.5h1 M192 568.5h1 M217 568.5h1 M242 568.5h1 M292 568.5h1 M317 568.5h1 M343 568.5h1 M368 568.5h1 M418 568.5h1 M443 568.5h1 M468 568.5h1 M493 568.5h1 M543 568.5h1 M568 568.5h1 M593 568.5h1 M618 568.5h1 M668 568.5h1 M693 568.5h1 M718 568.5h1 M743 568.5h1 M793 568.5h1 M818 568.5h1 M843 568.5h1 M868 568.5h1 M918 568.5h1 M943 568.5h1 M969 568.5h1 M994 568.5h1 M1044 568.5h1 M1069 568.5h1 M1094 568.5h1 M1119 568.5h1 M1169 568.5h1 M1194 568.5h1 M1219 568.5h1 M1244 568.5h1" stroke="#d8d0f0"/>
<rect x="17.5" y="336.5" width="1252" height="285" stroke="#888888"/>
</g></g>
<line x1="66" y1="482.500" x2="1223" y2="482.500" stroke="#c8c0ff" stroke-opacity=".6" stroke-dasharray="4 4" shape-rendering="crispEdges"/>
<path d="M18.0 436.3 L18.7 434.9 L19.4 435.9 L20.1 435.1 L20.8 434.9 L21.5 435.3 L22.2 435.8 L22.9 436.2 L23.6 436.3 L24.3 436.3 L25.0 435.7 L25.7 435.7 L26.4 435.0 L27.1 435.9 L27.8 435.6 L28.5 435.3 L29.2 436.1 L29.9 435.1 L30.6 434.9 L31.3 435.0 L32.0 434.9 L32.7 435.6 L33.4 436.0 L34.1 435.0 L34.8 435.5 L35.5 435.6 L36.2 435.6 L36.9 435.4 L37.6 435.6 L38.3 434.7 L39.0 434.8 L39.7 435.4 L40.4 435.1 L41.1 435.9 L41.8 435.1 L42.5 436.0 L43.2 435.1 L43.9 434.8 L44.6 435.5 L45.3 435.3 L46.0 435.2 L46.7 435.9 L47.4 435.1 L48.1 435.8 L48.8 436.0 L49.5 435.4 L50.2 435.5 L50.9 436.2 L51.6 435.7 L52.3 435.0 L53.0 434.8 L53.7 434.8 L54.4 435.2 L55.1 434.8 L55.8 435.7 L56.5 435.4 L57.2 435.2 L57.9 435.5 L58.6 436.2 L59.3 435.1 L60.0 434.9 L60.7 435.2 L61.4 435.2 L62.1 436.2 L62.8 435.8 M64.6 533.1 L65.3 531.5 L66.0 530.7 L66.7 530.6 L67.4 531.7 L68.1 531.3 L68.8 530.5 L69.5 531.2 L70.2 530.3 L70.9 531.0 L71.6 530.7 L72.3 530.4 L73.0 531.4 L73.7 531.3 L74.4 531.0 L75.1 530.5 L75.8 531.3 L76.5 530.9 L77.2 531.3 L77.9 530.3 L78.6 531.6 L79.3 530.2 L80.0 530.6 L80.7 530.8 L81.4 530.5 L82.1 530.3 L82.8 531.3 L83.5 531.8 L84.2 530.7 L84.9 530.6 L85.6 531.3 L86.3 530.6 L87.0 530.8 L87.7 531.3 L88.4 530.9 L89.1 530.4 L89.8 530.3 L90.5 531.1 L91.2 531.8 L91.9 531.7 L92.6 530.4 L93.3 531.0 L94.0 531.0 L94.7 530.5 L95.4 531.3 L96.1 531.0 L96.8 531.5 L97.5 530.7 L98.2 531.7 L98.9 531.5 L99.6 531.0 M100.9 437.1 L101.6 436.5 L102.3 435.4 L103.0 436.0 L103.7 435.9 L104.4 435.7 L105.1 436.3 L105.8 434.8 L106.5 435.8 L107.2 436.0 L107.9 434.9 L108.6 435.2 L109.3 434.8 L110.0 435.6 L110.7 435.9 L111.4 435.3 L112.1 435.8 L112.8 435.3 L113.5 435.8 L114.2 435.1 L114.9 436.3 L115.6 435.4 L116.3 434.7 L117.0 434.8 L117.7 435.9 L118.4 436.1 L119.1 435.7 L119.8 434.9 L120.5 436.1 L121.2 435.8 L121.9 434.9 L122.6 435.3 L123.3 435.8 L124.0 434.7 L124.7 434.8 L125.4 435.3 L126.1 436.1 L126.8 436.3 L127.5 435.2 L128.2 436.2 L128.9 436.0 L129.6 436.1 L130.3 435.6 L131.0 436.3 L131.7 435.7 L132.4 436.2 L133.1 435.6 L133.8 435.0 L134.5 435.5 L135.2 435.5 L135.9 435.2 M137.2 533.0 L137.9 532.0 L138.6 531.6 L139.3 530.8 L140.0 530.7 L140.7 531.0 L141.4 531.0 L142.1 530.9 L142.8 531.3 L143.5 530.5 L144.2 531.1 L144.9 530.6 L145.6 531.4 L146.3 531.3 L147.0 531.4 L147.7 531.0 L148.4 530.6 L149.1 531.7 L149.8 531.0 L150.5 530.8 L151.2 530.7 L151.9 530.8 L152.6 531.3 L153.3 531.5 L154.0 531.0 L154.7 531.4 L155.4 530.5 L156.1 530.9 L156.8 530.8 L157.5 530.7 L158.2 530.8 L158.9 531.4 L159.6 531.4 L160.3 530.5 L161.0 530.6 L161.7 531.5 L162.4 531.2 L163.1 531.3 L163.8 531.2 L164.5 531.3 L165.2 530.6 L165.9 530.3 L166.6 530.8 L167.3 530.3 L168.0 531.7 L168.7 531.0 L169.4 531.3 L170.1 531.7 L170.8 531.5 L171.5 530.6 L172.2 530.7 M173.5 437.1 L174.2 437.0 L174.9 436.3 L175.6 435.7 L176.3 435.4 L177.0 435.2 L177.7 435.5 L178.4 435.8 L179.1 436.1 L179.8 436.1 L180.5 436.1 L181.2 435.4 L181.9 435.4 L182.6 435.2 L183.3 436.3 L184.0 435.0 L184.7 435.0 L185.4 435.1 L186.1 436.2 L186.8 436.1 L187.5 435.2 L188.2 436.1 L188.9 436.1 L189.6 435.4 L190.3 435.0 L191.0 435.9 L191.7 435.3 L192.4 434.9 L193.1 436.1 L193.8 435.4 L194.5 435.3 L195.2 435.7 L195.9 435.1 L196.6 434.7 L197.3 435.3 L198.0 435.3 L198.7 434.7 L199.4 435.3 L200.1 435.9 L200.8 435.2 L201.5 435.8 L202.2 435.7 L202.9 435.0 L203.6 434.7 L204.3 435.8 L205.0 435.7 L205.7 435.2 L206.4 435.0 L207.1 436.1 L207.8 436.2 L208.5 435.1 M209.8 533.3 L210.5 532.1 L211.2 531.2 L211.9 530.5 L212.6 530.8 L213.3 531.3 L214.0 531.2 L214.7 531.0 L215.4 530.4 L216.1 530.5 L216.8 530.7 L217.5 530.9 L218.2 530.8 L218.9 531.6 L219.6 530.4 L220.3 531.8 L221.0 530.6 L221.7 531.6 L222.4 530.6 L223.1 531.1 L223.8 530.8 L224.5 530.3 L225.2 531.5 L225.9 531.5 L226.6 530.6 L227.3 531.4 L228.0 531.0 L228.7 531.8 L229.4 530.3 L230.1 530.8 L230.8 530.6 L231.5 531.2 L232.2 531.4 L232.9 531.5 L233.6 531.1 L234.3 530.8 L235.0 531.5 L235.7 530.4 L236.4 530.6 L237.1 531.4 L237.8 530.9 L238.5 531.8 L239.2 530.3 L239.9 530.9 L240.6 530.5 L241.3 530.2 L242.0 530.3 L242.7 530.3 L243.4 530.8 L244.1 530.9 L244.8 531.0 M246.0 437.4 L246.7 436.8 L247.4 436.0 L248.1 436.5 L248.8 435.1 L249.5 435.6 L250.2 435.5 L250.9 435.3 L251.6 436.1 L252.3 435.0 L253.0 436.1 L253.7 435.3 L254.4 435.2 L255.1 435.7 L255.8 435.6 L256.5 435.2 L257.2 434.8 L257.9 436.2 L258.6 435.3 L259.3 434.9 L260.0 435.8 L260.7 435.6 L261.4 435.2 L262.1 435.2 L262.8 436.1 L263.5 435.2 L264.2 435.4 L264.9 436.2 L265.6 435.3 L266.3 435.3 L267.0 435.0 L267.7 435.8 L268.4 435.8 L269.1 435.4 L269.8 435.3 L270.5 435.1 L271.2 436.0 L271.9 435.4 L272.6 436.0 L273.3 435.3 L274.0 435.9 L274.7 434.7 L275.4 435.1 L276.1 436.2 L276.8 435.8 L277.5 435.8 L278.2 435.5 L278.9 435.5 L279.6 435.0 L280.3 435.0 L281.0 435.7 M282.3 533.5 L283.0 531.6 L283.7 531.7 L284.4 530.6 L285.1 531.3 L285.8 530.5 L286.5 531.0 L287.2 530.7 L287.9 531.1 L288.6 530.4 L289.3 531.0 L290.0 531.2 L290.7 530.4 L291.4 530.7 L292.1 531.3 L292.8 531.1 L293.5 531.2 L294.2 531.4 L294.9 531.1 L295.6 530.6 L296.3 530.9 L297.0 531.5 L297.7 531.1 L298.4 531.4 L299.1 530.8 L299.8 530.9 L300.5 531.8 L301.2 531.5 L301.9 531.2 L302.6 530.4 L303.3 531.2 L304.0 530.3 L304.7 531.7 L305.4 531.8 L306.1 531.4 L306.8 530.6 L307.5 531.6 L308.2 530.5 L308.9 531.5 L309.6 531.0 L310.3 530.2 L311.0 531.6 L311.7 530.9 L312.4 531.5 L313.1 531.3 L313.8 531.1 L314.5 531.6 L315.2 530.5 L315.9 531.6 L316.6 530.7 L317.3 530.2 M318.6 437.4 L319.3 435.8 L320.0 435.3 L320.7 435.9 L321.4 435.0 L322.1 435.0 L322.8 435.2 L323.5 435.1 L324.2 436.2 L324.9 436.1 L325.6 436.1 L326.3 436.3 L327.0 435.4 L327.7 436.0 L328.4 435.1 L329.1 436.2 L329.8 436.0 L330.5 435.9 L331.2 435.1 L331.9 434.8 L332.6 436.2 L333.3 435.6 L334.0 435.7 L334.7 436.1 L335.4 434.9 L336.1 435.8 L336.8 435.4 L337.5 436.0 L338.2 435.4 L338.9 435.0 L339.6 436.2 L340.3 435.1 L341.0 435.9 L341.7 436.0 L342.4 435.1 L343.1 435.8 L343.8 435.3 L344.5 435.1 L345.2 435.0 L345.9 436.2 L346.6 435.3 L347.3 435.5 L348.0 435.5 L348.7 434.7 L349.4 435.9 L350.1 435.9 L350.8 436.1 L351.5 435.3 L352.2 435.0 L352.9 435.3 L353.6 435.9 M354.9 533.5 L355.6 531.9 L356.3 531.5 L357.0 530.7 L357.7 531.8 L358.4 531.0 L359.1 531.0 L359.8 531.5 L360.5 530.5 L361.2 531.4 L361.9 530.8 L362.6 531.5 L363.3 530.4 L364.0 530.6 L364.7 531.2 L365.4 531.0 L366.1 530.8 L366.8 531.1 L367.5 530.5 L368.2 530.9 L368.9 530.2 L369.6 531.5 L370.3 530.6 L371.0 531.5 L371.7 531.1 L372.4 531.2 L373.1 531.2 L373.8 530.4 L374.5 531.4 L375.2 530.7 L375.9 531.6 L376.6 531.5 L377.3 531.3 L378.0 531.5 L378.7 530.9 L379.4 531.3 L380.1 531.7 L380.8 530.5 L381.5 530.4 L382.2 530.9 L382.9 531.0 L383.6 530.4 L384.3 530.6 L385.0 531.6 L385.7 530.8 L386.4 530.4 L387.1 530.5 L387.8 531.1 L388.5 530.5 L389.2 531.0 L389.9 531.1 M391.2 437.6 L391.9 436.5 L392.6 436.5 L393.3 434.9 L394.0 436.3 L394.7 435.1 L395.4 434.8 L396.1 435.9 L396.8 435.6 L397.5 435.6 L398.2 435.0 L398.9 435.9 L399.6 435.2 L400.3 435.9 L401.0 435.1 L401.7 435.6 L402.4 435.7 L403.1 435.3 L403.8 435.5 L404.5 434.8 L405.2 435.7 L405.9 435.8 L406.6 434.9 L407.3 435.6 L408.0 435.9 L408.7 434.9 L409.4 436.0 L410.1 436.1 L410.8 434.8 L411.5 435.1 L412.2 434.8 L412.9 435.1 L413.6 434.8 L414.3 435.5 L415.0 435.1 L415.7 435.2 L416.4 435.4 L417.1 435.3 L417.8 436.0 L418.5 435.9 L419.2 434.9 L419.9 435.1 L420.6 434.7 L421.3 435.2 L422.0 434.9 L422.7 435.8 L423.4 435.9 L424.1 436.3 L424.8 435.0 L425.5 434.8 L426.2 435.9 M427.5 533.1 L428.2 532.7 L428.9 531.3 L429.6 530.9 L430.3 530.4 L431.0 531.8 L431.7 531.0 L432.4 530.9 L433.1 530.9 L433.8 531.4 L434.5 531.5 L435.2 531.0 L435.9 530.5 L436.6 530.9 L437.3 531.6 L438.0 530.9 L438.7 531.3 L439.4 531.1 L440.1 530.9 L440.8 531.1 L441.5 530.6 L442.2 531.1 L442.9 531.6 L443.6 530.3 L444.3 530.8 L445.0 531.6 L445.7 531.8 L446.4 530.2 L447.1 531.2 L447.8 531.2 L448.5 531.5 L449.2 531.0 L449.9 530.4 L450.6 530.7 L451.3 531.3 L452.0 531.4 L452.7 530.5 L453.4 531.2 L454.1 531.3 L454.8 531.3 L455.5 530.2 L456.2 530.9 L456.9 530.7 L457.6 531.2 L458.3 530.7 L459.0 530.4 L459.7 531.3 L460.4 530.7 L461.1 531.5 L461.8 530.7 L462.5 531.1 M463.8 438.2 L464.5 435.9 L465.2 436.3 L465.9 435.0 L466.6 436.3 L467.3 434.8 L468.0 435.9 L468.7 435.3 L469.4 435.0 L470.1 435.3 L470.8 435.5 L471.5 435.4 L472.2 434.9 L472.9 435.5 L473.6 435.2 L474.3 436.2 L475.0 435.3 L475.7 435.4 L476.4 435.1 L477.1 436.3 L477.8 435.2 L478.5 435.7 L479.2 436.0 L479.9 435.3 L480.6 435.9 L481.3 435.1 L482.0 434.9 L482.7 434.8 L483.4 435.4 L484.1 436.1 L484.8 435.0 L485.5 435.4 L486.2 435.9 L486.9 435.1 L487.6 434.9 L488.3 435.5 L489.0 435.4 L489.7 436.2 L490.4 436.1 L491.1 435.1 L491.8 435.6 L492.5 435.4 L493.2 434.8 L493.9 435.4 L494.6 436.2 L495.3 435.2 L496.0 435.6 L496.7 435.8 L497.4 434.8 L498.1 436.2 L498.8 434.9 M500.1 532.9 L500.8 532.4 L501.5 530.7 L502.2 531.0 L502.9 530.5 L503.6 531.0 L504.3 530.2 L505.0 530.4 L505.7 530.6 L506.4 530.3 L507.1 530.3 L507.8 530.5 L508.5 531.0 L509.2 530.4 L509.9 531.5 L510.6 530.9 L511.3 530.6 L512.0 530.6 L512.7 531.5 L513.4 530.3 L514.1 531.4 L514.8 530.4 L515.5 531.7 L516.2 530.9 L516.9 531.2 L517.6 531.6 L518.3 530.4 L519.0 530.3 L519.7 531.3 L520.4 531.1 L521.1 531.4 L521.8 530.6 L522.5 531.0 L523.2 530.5 L523.9 530.9 L524.6 530.7 L525.3 531.1 L526.0 530.7 L526.7 530.6 L527.4 531.2 L528.1 530.3 L528.8 531.5 L529.5 531.0 L530.2 530.6 L530.9 530.4 L531.6 531.0 L532.3 531.0 L533.0 531.4 L533.7 530.8 L534.4 530.9 L535.1 531.6 L535.8 530.6 L536.5 531.8 L537.2 531.6 L537.9 531.8 L538.6 531.7 L539.3 530.6 L540.0 531.5 L540.7 531.2 L541.4 530.5 L542.1 531.8 L542.8 531.2 L543.5 531.5 L544.2 531.1 L544.9 530.3 L545.6 531.6 L546.3 530.5 L547.0 530.6 L547.7 531.2 L548.4 530.5 L549.1 530.9 L549.8 531.3 L550.5 530.4 L551.2 531.3 L551.9 530.4 L552.6 531.0 L553.3 531.2 L554.0 531.3 L554.7 530.3 L555.4 530.5 L556.1 531.7 L556.8 530.8 L557.5 530.9 L558.2 530.8 L558.9 531.3 L559.6 531.4 L560.3 531.2 L561.0 530.8 L561.7 531.1 L562.4 531.0 L563.1 530.5 L563.8 531.7 L564.5 531.7 L565.2 531.4 L565.9 531.8 L566.6 530.9 L567.3 531.5 L568.0 530.6 L568.7 531.4 L569.4 531.3 L570.1 531.7 L570.8 531.5 M572.7 438.3 L573.4 436.1 L574.1 436.4 L574.8 435.7 L575.5 435.3 L576.2 435.3 L576.9 436.0 L577.6 436.0 L578.3 436.1 L579.0 435.8 L579.7 435.0 L580.4 434.9 L581.1 435.6 L581.8 435.0 L582.5 435.2 L583.2 434.9 L583.9 434.9 L584.6 435.8 L585.3 435.1 L586.0 436.1 L586.7 435.2 L587.4 436.1 L588.1 435.2 L588.8 435.1 L589.5 435.3 L590.2 434.7 L590.9 435.4 L591.6 435.3 L592.3 434.7 L593.0 436.1 L593.7 435.3 L594.4 434.7 L595.1 436.2 L595.8 435.1 L596.5 435.1 L597.2 434.7 L597.9 434.9 L598.6 435.8 L599.3 435.6 L600.0 435.5 L600.7 435.1 L601.4 435.2 L602.1 436.3 L602.8 435.3 L603.5 436.3 L604.2 436.1 L604.9 434.9 L605.6 436.1 L606.3 434.7 L607.0 435.8 L607.7 436.0 M609.0 533.5 L609.7 532.1 L610.4 532.0 L611.1 530.7 L611.8 531.2 L612.5 530.7 L613.2 530.9 L613.9 530.5 L614.6 531.3 L615.3 531.1 L616.0 531.4 L616.7 531.2 L617.4 531.2 L618.1 531.7 L618.8 531.5 L619.5 531.1 L620.2 530.7 L620.9 531.7 L621.6 530.8 L622.3 530.4 L623.0 530.7 L623.7 531.3 L624.4 531.7 L625.1 531.2 L625.8 531.3 L626.5 531.7 L627.2 531.4 L627.9 530.9 L628.6 530.9 L629.3 531.4 L630.0 530.7 L630.7 530.4 L631.4 531.2 L632.1 531.5 L632.8 530.6 L633.5 531.3 L634.2 531.6 L634.9 530.4 L635.6 530.4 L636.3 531.0 L637.0 530.7 L637.7 531.7 L638.4 531.8 L639.1 530.9 L639.8 531.5 L640.5 531.2 L641.2 530.5 L641.9 531.8 L642.6 530.5 L643.3 530.3 L644.0 530.9 M645.2 436.9 L645.9 436.5 L646.6 435.8 L647.3 436.4 L648.0 435.5 L648.7 436.1 L649.4 436.0 L650.1 435.6 L650.8 435.1 L651.5 435.2 L652.2 435.5 L652.9 435.3 L653.6 435.7 L654.3 435.5 L655.0 435.2 L655.7 435.7 L656.4 436.3 L657.1 435.0 L657.8 435.2 L658.5 434.7 L659.2 434.9 L659.9 434.8 L660.6 435.4 L661.3 436.0 L662.0 435.8 L662.7 436.2 L663.4 436.0 L664.1 435.6 L664.8 435.6 L665.5 434.7 L666.2 435.3 L666.9 435.1 L667.6 435.7 L668.3 434.8 L669.0 435.6 L669.7 435.3 L670.4 435.5 L671.1 435.3 L671.8 434.9 L672.5 435.9 L673.2 436.0 L673.9 435.7 L674.6 434.9 M886.0 435.7 L886.7 436.1 L887.4 436.3 L888.1 435.9 L888.8 434.8 L889.5 436.1 L890.2 435.8 L890.9 435.1 L891.6 436.2 L892.3 436.0 L893.0 436.1 L893.7 435.1 L894.4 435.6 L895.1 435.3 L895.8 435.2 M897.2 533.6 L897.9 532.2 L898.6 531.2 L899.3 531.3 L900.0 531.8 L900.7 531.2 L901.4 531.7 L902.1 531.1 L902.8 531.8 L903.5 530.2 L904.2 530.9 L904.9 531.1 L905.6 531.4 L906.3 531.7 L907.0 531.2 L907.7 531.0 L908.4 531.2 L909.1 531.1 L909.8 531.3 L910.5 531.7 L911.2 530.2 L911.9 530.7 L912.6 531.6 L913.3 530.3 L914.0 531.5 L914.7 530.2 L915.4 531.2 L916.1 531.5 L916.8 530.6 L917.5 530.8 L918.2 530.6 L918.9 531.3 L919.6 531.0 L920.3 531.2 L921.0 530.7 L921.7 531.1 L922.4 531.7 L923.1 531.4 L923.8 531.7 L924.5 530.6 L925.2 531.0 L925.9 530.8 L926.6 530.8 L927.3 531.5 L928.0 530.5 L928.7 531.1 L929.4 531.4 L930.1 531.7 L930.8 530.2 L931.5 530.6 L932.2 531.0 L932.9 531.7 M934.2 437.2 L934.9 437.1 L935.6 435.8 L936.3 435.8 L937.0 436.3 L937.7 434.8 L938.4 435.2 L939.1 434.9 L939.8 434.9 L940.5 435.2 L941.2 435.8 L941.9 435.6 L942.6 434.9 L943.3 436.0 L944.0 435.5 L944.7 434.9 L945.4 436.0 L946.1 436.0 L946.8 435.0 L947.5 436.2 L948.2 436.0 L948.9 435.1 L949.6 434.7 L950.3 436.1 L951.0 436.0 L951.7 434.9 L952.4 435.9 L953.1 435.9 L953.8 435.7 L954.5 436.0 L955.2 436.3 L955.9 435.2 L956.6 436.0 L957.3 436.2 L958.0 435.2 L958.7 435.8 L959.4 435.8 L960.1 436.1 L960.8 435.6 L961.5 435.1 L962.2 435.1 L962.9 435.6 L963.6 434.9 L964.3 436.1 L965.0 436.1 L965.7 435.1 L966.4 435.8 L967.1 435.8 L967.8 434.9 L968.5 435.9 L969.2 435.9 L969.9 435.2 L970.6 434.9 L971.3 435.2 L972.0 435.9 L972.7 435.4 L973.4 436.0 L974.1 435.0 L974.8 434.9 L975.5 435.3 L976.2 436.1 L976.9 435.0 L977.6 434.8 L978.3 435.9 L979.0 434.8 L979.7 435.8 L980.4 434.8 L981.1 435.1 L981.8 435.8 L982.5 436.1 L983.2 435.4 L983.9 435.4 L984.6 434.7 L985.3 435.2 L986.0 435.1 L986.7 436.0 L987.4 435.8 L988.1 436.0 L988.8 435.6 L989.5 435.8 L990.2 434.9 L990.9 435.3 L991.6 435.2 L992.3 435.2 L993.0 435.9 L993.7 435.0 L994.4 435.2 L995.1 435.2 L995.8 436.1 L996.5 435.7 L997.2 435.5 L997.9 435.3 L998.6 436.2 L999.3 436.2 L1000.0 435.4 L1000.7 435.6 L1001.4 436.1 L1002.1 435.1 L1002.8 435.1 L1003.5 434.9 L1004.2 435.5 L1004.9 435.9 L1005.6 435.0 L1006.3 435.4 L1007.0 436.3 L1007.7 435.5 L1008.4 435.3 L1009.1 436.0 L1009.8 436.1 L1010.5 435.3 L1011.2 434.9 L1011.9 435.7 L1012.6 435.9 L1013.3 436.2 L1014.0 435.8 L1014.7 435.2 L1015.4 435.5 L1016.1 435.2 L1016.8 435.4 L1017.5 435.4 L1018.2 436.2 L1018.9 436.1 L1019.6 436.2 L1020.3 435.5 L1021.0 436.2 L1021.7 434.9 L1022.4 436.2 L1023.1 435.7 L1023.8 436.1 L1024.5 435.4 L1025.2 436.3 L1025.9 434.7 L1026.6 436.1 L1027.3 436.0 L1028.0 435.3 L1028.7 436.0 L1029.4 435.0 L1030.1 435.9 L1030.8 435.4 L1031.5 435.4 L1032.2 435.0 L1032.9 436.0 L1033.6 435.9 L1034.3 434.8 L1035.0 436.3 L1035.7 435.1 L1036.4 435.3 L1037.1 435.4 L1037.8 435.6 L1038.5 436.1 L1039.2 436.2 L1039.9 435.7 L1040.6 435.3 L1041.3 434.9 L1042.0 434.8 L1042.7 435.5 L1043.4 435.6 L1044.1 435.4 L1044.8 436.3 L1045.5 435.4 L1046.2 435.3 L1046.9 435.4 L1047.6 435.0 L1048.3 436.2 L1049.0 435.6 L1049.7 435.6 L1050.4 435.4 L1051.1 435.1 L1051.8 435.2 L1052.5 435.5 L1053.2 435.4 L1053.9 436.3 L1054.6 435.6 L1055.3 435.0 L1056.0 434.8 L1056.7 435.0 L1057.4 435.3 L1058.1 436.0 L1058.8 436.1 L1059.5 435.1 L1060.2 435.9 L1060.9 435.4 L1061.6 435.6 L1062.3 435.6 L1063.0 434.8 L1063.7 434.8 L1064.4 435.8 L1065.1 435.8 L1065.8 435.3 L1066.5 436.2 L1067.2 436.0 L1067.9 435.2 L1068.6 434.8 L1069.3 435.6 L1070.0 435.7 L1070.7 435.1 L1071.4 434.8 L1072.1 435.5 L1072.8 434.8 L1073.5 435.9 L1074.2 435.7 L1074.9 435.1 L1075.6 435.4 L1076.3 435.1 L1077.0 435.0 L1077.7 435.0 L1078.4 436.0 L1079.1 435.4 L1079.8 435.8 L1080.5 435.3 L1081.2 436.0 L1081.9 435.7 L1082.6 435.7 L1083.3 435.3 L1084.0 435.6 L1084.7 435.0 L1085.4 436.3 L1086.1 435.8 L1086.8 435.6 L1087.5 435.7 L1088.2 434.9 L1088.9 435.2 L1089.6 435.1 L1090.3 436.0 L1091.0 434.7 L1091.7 435.4 L1092.4 436.1 L1093.1 436.0 L1093.8 435.9 L1094.5 435.2 L1095.2 435.1 L1095.9 435.8 L1096.6 435.2 L1097.3 435.9 L1098.0 435.3 L1098.7 435.9 L1099.4 435.6 L1100.1 436.0 L1100.8 436.3 L1101.5 435.3 L1102.2 436.3 L1102.9 434.7 L1103.6 436.1 L1104.3 434.7 L1105.0 435.6 L1105.7 435.3 L1106.4 435.9 L1107.1 435.2 L1107.8 435.0 L1108.5 436.0 L1109.2 435.6 L1109.9 435.9 L1110.6 435.5 L1111.3 434.8 L1112.0 435.9 L1112.7 435.0 L1113.4 435.5 L1114.1 434.7 L1114.8 435.1 L1115.5 435.8 L1116.2 435.9 L1116.9 435.7 L1117.6 435.4 L1118.3 435.9 L1119.0 435.8 L1119.7 435.0 L1120.4 435.6 L1121.1 435.7 L1121.8 435.9 L1122.5 435.0 L1123.2 435.2 L1123.9 435.2 L1124.6 434.9 L1125.3 435.3 L1126.0 435.9 L1126.7 435.6 L1127.4 435.0 L1128.1 435.9 L1128.8 434.9 L1129.5 435.9 L1130.2 434.9 L1130.9 434.9 L1131.6 435.1 L1132.3 435.5 L1133.0 435.1 L1133.7 436.1 L1134.4 436.2 L1135.1 435.2 L1135.8 435.9 L1136.5 435.8 L1137.2 435.6 L1137.9 435.1 L1138.6 436.2 L1139.3 436.2 L1140.0 434.7 L1140.7 435.2 L1141.4 435.2 L1142.1 435.0 L1142.8 435.4 L1143.5 436.1 L1144.2 434.7 L1144.9 436.0 L1145.6 435.2 L1146.3 434.7 L1147.0 436.1 L1147.7 435.1 L1148.4 435.0 L1149.1 434.9 L1149.8 435.3 L1150.5 434.9 L1151.2 435.0 L1151.9 435.1 L1152.6 435.6 L1153.3 435.4 L1154.0 435.2 L1154.7 435.5 L1155.4 435.9 L1156.1 435.9 L1156.8 435.2 L1157.5 436.2 L1158.2 436.0 L1158.9 435.6 L1159.6 435.5 L1160.3 435.2 L1161.0 434.9 L1161.7 436.1 L1162.4 435.7 L1163.1 434.9 L1163.8 436.2 L1164.5 436.1 L1165.2 434.8 L1165.9 435.8 L1166.6 435.1 L1167.3 435.6 L1168.0 436.0 L1168.7 435.3 L1169.4 435.5 L1170.1 435.8 L1170.8 435.0 L1171.5 435.7 L1172.2 435.4 L1172.9 436.3 L1173.6 435.0 L1174.3 435.8 L1175.0 434.8 L1175.7 435.1 L1176.4 434.9 L1177.1 434.9 L1177.8 435.5 L1178.5 435.0 L1179.2 436.0 L1179.9 434.9 L1180.6 435.7 L1181.3 436.1 L1182.0 434.9 L1182.7 435.0 L1183.4 435.9 L1184.1 435.5 L1184.8 436.2 L1185.5 435.2 L1186.2 435.3 L1186.9 436.2 L1187.6 435.3 L1188.3 436.2 L1189.0 436.1 L1189.7 435.0 L1190.4 435.6 L1191.1 436.2 L1191.8 434.9 L1192.5 436.1 L1193.2 435.9 L1193.9 435.9 L1194.6 435.7 L1195.3 434.9 L1196.0 436.2 L1196.7 434.9 L1197.4 436.0 L1198.1 435.9 L1198.8 435.2 L1199.5 435.8 L1200.2 435.4 L1200.9 435.9 L1201.6 434.8 L1202.3 436.2 L1203.0 435.3 L1203.7 436.0 L1204.4 435.5 L1205.1 436.0 L1205.8 435.2 L1206.5 435.6 L1207.2 434.7 L1207.9 435.5 L1208.6 434.8 L1209.3 436.1 L1210.0 435.8 L1210.7 435.4 L1211.4 436.3 L1212.1 436.2 L1212.8 436.2 L1213.5 434.8 L1214.2 435.8 L1214.9 435.9 L1215.6 435.7 L1216.3 434.7 L1217.0 436.2 L1217.7 435.4 L1218.4 435.7 L1219.1 436.0 L1219.8 435.1 L1220.5 434.7 L1221.2 436.2 L1221.9 435.1 L1222.6 434.8 L1223.3 434.9 L1224.0 436.3 L1224.7 435.9 L1225.4 435.0 L1226.1 434.9 L1226.8 436.1 L1227.5 435.8 L1228.2 435.6 L1228.9 434.9 L1229.6 435.4 L1230.3 436.2 L1231.0 434.7 L1231.7 435.4 L1232.4 434.8 L1233.1 436.3 L1233.8 434.9 L1234.5 436.2 L1235.2 436.0 L1235.9 435.9 L1236.6 434.8 L1237.3 435.8 L1238.0 435.5 L1238.7 435.5 L1239.4 434.9 L1240.1 435.5 L1240.8 436.0 L1241.5 434.9 L1242.2 436.1 L1242.9 435.4 L1243.6 435.1 L1244.3 435.1 L1245.0 435.4 L1245.7 435.7 L1246.4 435.6 L1247.1 436.1 L1247.8 435.5 L1248.5 435.5 L1249.2 436.3 L1249.9 435.0 L1250.6 434.7 L1251.3 435.2 L1252.0 435.2 L1252.7 434.9 L1253.4 435.4 L1254.1 434.8 L1254.8 436.2 L1255.5 435.5 L1256.2 436.1 L1256.9 435.8 L1257.6 435.9 L1258.3 435.9 L1259.0 435.2 L1259.7 435.9 L1260.4 435.0 L1261.1 435.6 L1261.8 435.7 L1262.5 435.9 L1263.2 435.0 L1263.9 435.3 L1264.6 436.0 L1265.3 436.0 L1266.0 436.3 L1266.7 434.9 L1267.4 435.0" fill="none" stroke="#ffff48" stroke-width="2.300" stroke-linejoin="round" stroke-linecap="round"/>
<path d="M63.4 435.5L64.6 531.0 M99.7 531.0L100.9 435.5 M136.0 435.5L137.2 531.0 M172.3 531.0L173.5 435.5 M208.6 435.5L209.8 531.0 M244.8 531.0L246.0 435.5 M281.1 435.5L282.3 531.0 M317.4 531.0L318.6 435.5 M353.7 435.5L354.9 531.0 M390.0 531.0L391.2 435.5 M426.3 435.5L427.5 531.0 M462.6 531.0L463.8 435.5 M498.9 435.5L500.1 531.0 M571.5 531.0L572.7 435.5 M607.8 435.5L609.0 531.0 M644.0 531.0L645.2 435.5 M896.0 435.5L897.2 531.0 M933.0 531.0L934.2 435.5" fill="none" stroke="#fff6ee" stroke-width="1.300"/>
<path d="M675 436.500H886" stroke="#fff" stroke-width="1.200" opacity=".95"/>
<path d="M675.0 435.5 L676.9 531.0 L677.3 531.0 L679.2 435.5 L679.5 435.5 L681.4 531.0 L690.9 531.0 L692.8 435.5 L693.2 435.5 L695.1 531.0 L695.4 531.0 L697.3 435.5 L697.7 435.5 L699.6 531.0 L704.5 531.0 L706.4 435.5 L706.8 435.5 L708.7 531.0 L713.6 531.0 L715.5 435.5 L715.8 435.5 L717.7 531.0 L720.4 531.0 L722.3 435.5 L722.6 435.5 L724.5 531.0 L731.7 531.0 L733.6 435.5 L734.0 435.5 L735.9 531.0 L738.5 531.0 L740.4 435.5 L741.1 433.9 L742.1 434.3 L742.7 435.5 L743.1 435.5 L745.0 531.0 L749.9 531.0 L751.8 435.5 L752.1 435.5 L754.0 531.0 L754.4 531.0 L756.3 435.5 L756.7 435.5 L758.6 531.0 L768.0 531.0 L769.9 435.5 L770.6 433.9 L771.6 434.3 L772.2 435.5 L772.6 435.5 L774.5 531.0 L774.8 531.0 L776.7 435.5 L777.1 435.5 L779.0 531.0 L779.4 531.0 L781.3 435.5 L781.6 435.5 L783.5 531.0 L788.4 531.0 L790.3 435.5 L790.7 435.5 L792.6 531.0 L793.0 531.0 L794.9 435.5 L795.6 433.9 L796.6 434.3 L797.2 435.5 L797.5 435.5 L799.4 531.0 L806.6 531.0 L808.5 435.5 L808.9 435.5 L810.8 531.0 L811.1 531.0 L813.0 435.5 L813.7 433.9 L814.7 434.3 L815.3 435.5 L817.9 435.5 L819.8 531.0 L824.7 531.0 L826.6 435.5 L827.3 433.9 L828.3 434.3 L828.9 435.5 L829.3 435.5 L831.2 531.0 L836.1 531.0 L838.0 435.5 L838.4 435.5 L840.3 531.0 L840.6 531.0 L842.5 435.5 L842.9 435.5 L844.8 531.0 L847.4 531.0 L849.3 435.5 L850.0 433.9 L851.0 434.3 L851.6 435.5 L854.2 435.5 L856.1 531.0 L858.8 531.0 L860.7 435.5 L861.4 433.9 L862.4 434.3 L863.0 435.5 L865.6 435.5 L867.5 531.0 L870.1 531.0 L872.0 435.5 L872.4 435.5 L874.3 531.0 L874.7 531.0 L876.6 435.5 L876.9 435.5 L878.8 531.0 L881.5 531.0 L883.4 435.5 L883.7 435.5 L885.6 531.0 L886.0 531.0 L887.2 435.5" fill="none" stroke="#fffaf4" stroke-width="1.300" stroke-opacity=".95" stroke-linejoin="round"/>
<path d="M676 531.800H886" stroke="#f4f060" stroke-width="1.600" opacity=".85"/>
<path d="M681.0 531.6H690.9 M699.2 531.6H704.5 M708.3 531.6H713.6 M717.3 531.6H720.4 M724.1 531.6H731.7 M735.5 531.6H738.5 M744.6 531.6H749.9 M758.2 531.6H768.0 M783.1 531.6H788.4 M799.0 531.6H806.6 M819.4 531.6H824.7 M830.8 531.6H836.1 M844.4 531.6H847.4 M855.7 531.6H858.8 M867.1 531.6H870.1 M878.4 531.6H881.5" stroke="#f8f060" stroke-width="1.800"/>
<path d="M1271 626.500h7M1275 623.500l3 3-3 3" fill="none" stroke="#f0ec20" stroke-width="1.200"/>
</svg>
<div id="menubar">
<div class="mb" style="left:3px;width:52px"><svg width="22" height="25" viewBox="0 0 22 22"><rect x="4.700" y="5.700" width="10" height="11" rx="1" fill="none" stroke="#dedede" stroke-width="1.500"/><path d="M7 5.500l2.700-3 2.700 3z" fill="#dedede"/><rect x="6.500" y="8" width="6.500" height="3.500" fill="#9c9c9c"/></svg><span style="left:22px">File</span></div>
<div class="mb" style="left:62px;width:70px"><svg width="22" height="25" viewBox="0 0 22 22"><path d="M8.500 3.200L12.500 7.600H10V12h2.500L8.500 16.300 4.500 12H7V7.600H4.500z" fill="#f4f4f4"/></svg><span style="left:21px">Vertical</span></div>
<div class="mb" style="left:138px;width:88px"><svg width="22" height="25" viewBox="0 0 22 22"><path d="M3 10.500l5-4v2.600h5v-2.600l5 4-5 4v-2.600h-5v2.600z" fill="#d4d4d4"/></svg><span style="left:22px">Timebase</span></div>
<div class="mb" style="left:232px;width:70px"><svg width="22" height="25" viewBox="0 0 22 22"><rect x="8.800" y="4.300" width="2.200" height="11.800" fill="#d8d8d8"/><path d="M11 4.300l3.700 2.900-3.700 3.300z" fill="#d8d8d8"/></svg><span style="left:22px">Trigger</span></div>
<div class="mb" style="left:309px;width:72px"><svg width="22" height="25" viewBox="0 0 22 22"><rect x="4.800" y="6.800" width="11.400" height="8.200" rx="1" fill="none" stroke="#e0e0e0" stroke-width="1.500"/><path d="M6.500 13.500l2.300-3.500 1.700 1.800 1.500-1.300 2.200 3z" fill="#e0e0e0"/></svg><span style="left:22px">Display</span></div>
<div class="mb" style="left:389px;width:75px"><svg width="22" height="25" viewBox="0 0 22 22"><path d="M14 5.800l-.8 6.600-2-2-4.200 4.200-2.100-2.100 4.200-4.200-2-2z" fill="#d4d4d4"/></svg><span style="left:21px">Cursors</span></div>
<div class="mb" style="left:472px;width:78px"><svg width="22" height="25" viewBox="0 0 22 22"><rect x="5.300" y="4.500" width="8" height="11" fill="none" stroke="#c8c8c8" stroke-width="1.200"/><path d="M6 6.500h3M6 8.500h4M6 10.500h3M6 12.500h4M6 14h3" stroke="#c8c8c8" stroke-width="1"/></svg><span style="left:21px">Measure</span></div>
<div class="mb" style="left:557px;width:57px"><svg width="22" height="25" viewBox="0 0 22 22"><rect x="5" y="4.500" width="11" height="12" rx="1.500" fill="#dcdcdc"/><rect x="6.500" y="6" width="8" height="2.500" fill="#333"/><path d="M7 10.500h1.800M10 10.500h1.800M13 10.500h1.800M7 13h1.800M10 13h1.800M13 13h1.800" stroke="#333" stroke-width="1.400"/></svg><span style="left:22px">Math</span></div>
<div class="mb" style="left:621px;width:77px"><svg width="22" height="25" viewBox="0 0 22 22"><path d="M4.500 4v12.500h13" fill="none" stroke="#ddd" stroke-width="1.400"/><path d="M6 13.500l3-4 2.500 2 4.500-5" fill="none" stroke="#ddd" stroke-width="1.400"/><path d="M13.500 6h3v3" fill="none" stroke="#ddd" stroke-width="1.300"/></svg><span style="left:22px">Analysis</span></div>
<div class="mb" style="left:705px;width:72px"><svg width="22" height="25" viewBox="0 0 22 22"><path d="M5.500 4.500l10 11" stroke="#e4e4e4" stroke-width="2.600" stroke-linecap="round"/><path d="M15 5l-10 11" stroke="#e4e4e4" stroke-width="2.200" stroke-linecap="round"/><circle cx="15.200" cy="5" r="2.600" fill="#e4e4e4"/><circle cx="16.500" cy="3.800" r="1.300" fill="#2b2b2b"/><circle cx="5.200" cy="4.300" r="1.600" fill="#e4e4e4"/></svg><span style="left:22px">Utilities</span></div>
<div class="mb" style="left:784px;width:75px"><svg width="22" height="25" viewBox="0 0 22 22"><circle cx="10.500" cy="10" r="6" fill="#e4e4e4"/><rect x="9.600" y="9" width="1.900" height="4.500" fill="#2b2b2b"/><circle cx="10.500" cy="6.800" r="1.100" fill="#2b2b2b"/></svg><span style="left:22px">Support</span></div>
</div>
<div id="tbl">
<div class="row hd" style="top:0">
<div class="c c0" style="left:0;width:80px;background:#fffaae;height:15px;color:#000;font-weight:normal;font-size:12px;margin-left:0;padding-left:2px">CAN FD</div>
<div class="c" style="left:80px;width:80px">Time</div>
<div class="c" style="left:160px;width:80px">Format</div>
<div class="c" style="left:240px;width:80px">ID</div>
<div class="c" style="left:320px;width:32px">IDE</div>
<div class="c" style="left:352px;width:32px">EDL</div>
<div class="c" style="left:384px;width:32px">BRS</div>
<div class="c" style="left:416px;width:32px">ESI</div>
<div class="c" style="left:448px;width:32px">RTR</div>
<div class="c" style="left:480px;width:32px">DLC</div>
<div class="c" style="left:512px;width:300px">Data</div>
<div class="c" style="left:812px;width:80px">CRC</div>
<div class="c" style="left:892px;width:32px">CL</div>
<div class="c" style="left:924px;width:80px">BitRate</div>
<div class="c" style="left:1004px;width:80px">BR Data</div>
<div class="c" style="left:1084px;width:155px">Status</div>
</div>
<div class="row" style="top:16px">
<div class="c c0" style="left:0px;width:80px">5</div>
<div class="c" style="left:80px;width:80px">-1.76583 ms</div>
<div class="c" style="left:160px;width:80px">FD</div>
<div class="c" style="left:240px;width:80px">0x123</div>
<div class="c" style="left:320px;width:32px">0</div>
<div class="c" style="left:352px;width:32px">1</div>
<div class="c" style="left:384px;width:32px">1</div>
<div class="c" style="left:416px;width:32px">0</div>
<div class="c" style="left:448px;width:32px"></div>
<div class="c" style="left:480px;width:32px">64</div>
<div class="c" style="left:512px;width:300px">11 12 13 14 15 16 17 18 21 22 23 24 25 26 27 28 31...</div>
<div class="c" style="left:812px;width:80px">0x37672</div>
<div class="c" style="left:892px;width:32px">21</div>
<div class="c" style="left:924px;width:80px">499628</div>
<div class="c" style="left:1004px;width:80px">7.99985e+6</div>
<div class="c" style="left:1084px;width:155px"></div>
</div>
<div class="row" style="top:32px">
<div class="c c0" style="left:0px;width:80px">6</div>
<div class="c" style="left:80px;width:80px">-1.53882 ms</div>
<div class="c" style="left:160px;width:80px">FD</div>
<div class="c" style="left:240px;width:80px">0x123</div>
<div class="c" style="left:320px;width:32px">0</div>
<div class="c" style="left:352px;width:32px">1</div>
<div class="c" style="left:384px;width:32px">1</div>
<div class="c" style="left:416px;width:32px">0</div>
<div class="c" style="left:448px;width:32px"></div>
<div class="c" style="left:480px;width:32px">64</div>
<div class="c" style="left:512px;width:300px">11 12 13 14 15 16 17 18 21 22 23 24 25 26 27 28 31...</div>
<div class="c" style="left:812px;width:80px">0x37672</div>
<div class="c" style="left:892px;width:32px">21</div>
<div class="c" style="left:924px;width:80px">499632</div>
<div class="c" style="left:1004px;width:80px">7.99973e+6</div>
<div class="c" style="left:1084px;width:155px"></div>
</div>
<div class="row sel" style="top:48px">
<div class="c c0" style="left:0px;width:80px">7</div>
<div class="c" style="left:80px;width:80px">-117.67 µs</div>
<div class="c" style="left:160px;width:80px">FD</div>
<div class="c" style="left:240px;width:80px">0x555</div>
<div class="c" style="left:320px;width:32px">0</div>
<div class="c" style="left:352px;width:32px">1</div>
<div class="c" style="left:384px;width:32px">1</div>
<div class="c" style="left:416px;width:32px">0</div>
<div class="c" style="left:448px;width:32px"></div>
<div class="c" style="left:480px;width:32px">8</div>
<div class="c" style="left:512px;width:300px">11 12 13 14 15 16 17 18</div>
<div class="c" style="left:812px;width:80px">0x9988</div>
<div class="c" style="left:892px;width:32px">17</div>
<div class="c" style="left:924px;width:80px">499642</div>
<div class="c" style="left:1004px;width:80px">7.99988e+6</div>
<div class="c" style="left:1084px;width:155px"></div>
</div>
<div class="row" style="top:64px">
<div class="c c0" style="left:0px;width:80px">8</div>
<div class="c" style="left:80px;width:80px">-29.79 µs</div>
<div class="c" style="left:160px;width:80px">FD</div>
<div class="c" style="left:240px;width:80px">0x123</div>
<div class="c" style="left:320px;width:32px">0</div>
<div class="c" style="left:352px;width:32px">1</div>
<div class="c" style="left:384px;width:32px">1</div>
<div class="c" style="left:416px;width:32px">0</div>
<div class="c" style="left:448px;width:32px"></div>
<div class="c" style="left:480px;width:32px">64</div>
<div class="c" style="left:512px;width:300px">11 12 13 14 15 16 17 18 21 22 23 24 25 26 27 28 31...</div>
<div class="c" style="left:812px;width:80px">0x37672</div>
<div class="c" style="left:892px;width:32px">21</div>
<div class="c" style="left:924px;width:80px">499624</div>
<div class="c" style="left:1004px;width:80px">7.99979e+6</div>
<div class="c" style="left:1084px;width:155px"></div>
</div>
<div class="row" style="top:80px">
<div class="c c0" style="left:0px;width:80px">9</div>
<div class="c" style="left:80px;width:80px">169.21 µs</div>
<div class="c" style="left:160px;width:80px">FD</div>
<div class="c" style="left:240px;width:80px">0x123</div>
<div class="c" style="left:320px;width:32px">0</div>
<div class="c" style="left:352px;width:32px">1</div>
<div class="c" style="left:384px;width:32px">1</div>
<div class="c" style="left:416px;width:32px">0</div>
<div class="c" style="left:448px;width:32px"></div>
<div class="c" style="left:480px;width:32px">64</div>
<div class="c" style="left:512px;width:300px">11 12 13 14 15 16 17 18 21 22 23 24 25 26 27 28 31...</div>
<div class="c" style="left:812px;width:80px">0x37672</div>
<div class="c" style="left:892px;width:32px">21</div>
<div class="c" style="left:924px;width:80px">499627</div>
<div class="c" style="left:1004px;width:80px">7.99984e+6</div>
<div class="c" style="left:1084px;width:155px"></div>
</div>
</div>
<div style="position:absolute;left:1243px;top:631px;width:34px;height:97px;background:#1c1c1c"></div>
<div style="position:absolute;left:1243px;top:661px;width:32px;height:40px;background:#343434"></div>
<div style="position:absolute;left:1244px;top:633px;width:30px;height:29px;background:linear-gradient(#303030,#292929);border:1px solid #3c3c3c;border-bottom-color:#151515;border-radius:5px"><svg width="28" height="27"><path d="M2.500 20.500L14.500 6.500l12.500 14z" fill="#f6f6f6"/></svg></div>
<div style="position:absolute;left:1245px;top:670px;width:28px;height:14px;background:#2b2b2b;border:1px solid #222;border-radius:3px;box-shadow:0 1px 1px #181818"></div>
<div style="position:absolute;left:1244px;top:699px;width:30px;height:29px;background:linear-gradient(#303030,#292929);border:1px solid #3c3c3c;border-top-color:#151515;border-radius:5px"><svg width="28" height="27"><path d="M2.500 8L14.500 21.500l12.500-13.500z" fill="#f6f6f6"/></svg></div>
<div id="footer">
<div style="position:absolute;left:0;top:0;width:1280px;height:2px;background:#262626"></div>
<div style="position:absolute;left:0;top:1px;width:1280px;height:60px;border:1px solid #5c5c5c;border-radius:5px 5px 0 0;border-bottom:none"></div>
<div style="position:absolute;left:5px;top:5px;width:97px;height:48px;background:linear-gradient(#2c2c2c,#1b1b1b);border:1px solid #777;border-right-color:#111;border-top-color:#5a5a5a;border-bottom:none;border-radius:3px 3px 0 0;box-shadow:2px 0 0 #111"></div>
<div style="position:absolute;left:6px;top:6px;width:22px;height:14px;background:#f6f020;border-radius:3px;color:#000;font-weight:bold;font-size:12px;line-height:15px;text-align:center">Z1</div>
<div style="position:absolute;left:30px;top:4px;width:69px;text-align:right;font-size:12px;line-height:14px;color:#f0f0f0">zoom(M1)</div>
<div style="position:absolute;left:10px;top:22px;width:88px;text-align:right;font-size:12px;line-height:14px;color:#f0f0f0">500 mV/div<br>6.9 µs/div</div>
<div style="position:absolute;left:105px;top:6px;width:95px;height:46px;background:linear-gradient(#626262,#6e6e6e);border-radius:3px 3px 0 0"></div>
<div style="position:absolute;left:106px;top:7px;width:26px;height:14px;background:#f4ee20;border-radius:2px;color:#000;font-weight:bold;font-size:12px;line-height:14px;text-align:center">M1</div>
<div style="position:absolute;left:110px;top:23px;width:89px;text-align:right;font-size:12px;line-height:14px;color:#f4f4f4">500 mV/div<br>1.00 ms/div</div>

<div style="position:absolute;left:1064px;top:4px;width:110px;height:46px;background:#1c1c1c;border:1px solid #2e2e2e;border-left-color:#8a8a8a;border-top-color:#6e6e6e;border-radius:4px;overflow:hidden"><div style="height:15px;background:linear-gradient(#6a6a6a,#505050)"></div></div>
<div style="position:absolute;left:1067px;top:5px;font-size:12px;font-weight:bold;line-height:14px">Timebase</div>
<div style="position:absolute;left:1100px;top:5px;width:72px;text-align:right;font-size:12px;line-height:14px">-40 µs</div>
<div style="position:absolute;left:1066px;top:23px;width:106px;text-align:right;font-size:12px;line-height:13px">1.00 ms/div<br>250 MS/s</div>
<div style="position:absolute;left:1066px;top:36px;font-size:12px;line-height:13px">2.5 MS</div>

<div style="position:absolute;left:1179px;top:4px;width:96px;height:46px;background:#1c1c1c;border:1px solid #2e2e2e;border-left-color:#8a8a8a;border-top-color:#6e6e6e;border-radius:4px;overflow:hidden"><div style="height:15px;background:linear-gradient(#6a6a6a,#505050)"></div></div>
<div style="position:absolute;left:1182px;top:5px;font-size:12px;font-weight:bold;line-height:14px">Trigger</div>
<div style="position:absolute;left:1252px;top:6px;width:19px;height:12px;background:#000;border-radius:2px;font-size:12px;line-height:13px;text-align:center">DC</div>
<div style="position:absolute;left:1181px;top:23px;font-size:12px;line-height:13px">Norm.<br>CAN FD</div>
<div style="position:absolute;left:1200px;top:23px;width:72px;text-align:right;font-size:12px;line-height:13px">395 mV</div>

<div style="position:absolute;left:0;top:53px;width:1280px;height:2px;background:#0ca60c"></div>
<div style="position:absolute;left:7px;top:54px;font-size:15.500px;line-height:18px;font-weight:bold;white-space:nowrap;transform-origin:0 50%;transform:scaleX(.80);color:#f4f4f4;-webkit-text-stroke:.3px #f4f4f4">TELEDYNE</div>
<div style="position:absolute;left:78px;top:54px;font-size:15.500px;line-height:18px;white-space:nowrap;transform-origin:0 50%;transform:scaleX(.70);color:#cdcdcd;-webkit-text-stroke:.35px #cdcdcd">LECROY</div>
<div style="position:absolute;left:1100px;top:56px;width:163px;text-align:right;font-size:12px;line-height:14px;color:#f0f0f0">5/1/2014 4:56:42 PM</div>
</div>
</body></html>
